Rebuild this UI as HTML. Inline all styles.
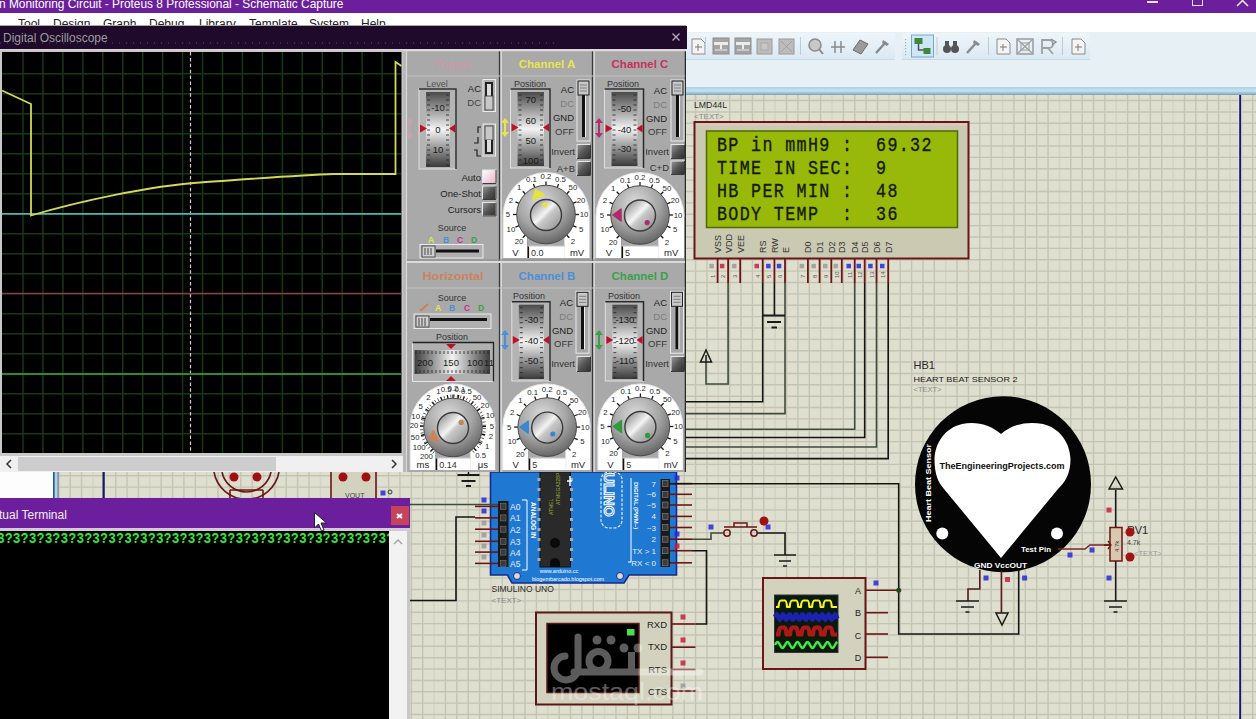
<!DOCTYPE html><html><head><meta charset="utf-8"><style>
html,body{margin:0;padding:0;width:1256px;height:719px;overflow:hidden;background:#dfdfcf;font-family:"Liberation Sans", sans-serif;}
.a{position:absolute;}
svg text{font-family:"Liberation Sans", sans-serif;}
</style></head><body>
<svg width="1256" height="719" style="position:absolute;left:0;top:0" ><g stroke="#d3d3c3" stroke-width="1.4"><line x1="36.11" y1="0" x2="36.11" y2="719"/><line x1="92.96" y1="0" x2="92.96" y2="719"/><line x1="149.81" y1="0" x2="149.81" y2="719"/><line x1="206.66" y1="0" x2="206.66" y2="719"/><line x1="263.51" y1="0" x2="263.51" y2="719"/><line x1="320.36" y1="0" x2="320.36" y2="719"/><line x1="377.21" y1="0" x2="377.21" y2="719"/><line x1="434.06" y1="0" x2="434.06" y2="719"/><line x1="490.91" y1="0" x2="490.91" y2="719"/><line x1="547.76" y1="0" x2="547.76" y2="719"/><line x1="604.61" y1="0" x2="604.61" y2="719"/><line x1="661.46" y1="0" x2="661.46" y2="719"/><line x1="718.31" y1="0" x2="718.31" y2="719"/><line x1="775.16" y1="0" x2="775.16" y2="719"/><line x1="832.01" y1="0" x2="832.01" y2="719"/><line x1="888.86" y1="0" x2="888.86" y2="719"/><line x1="945.71" y1="0" x2="945.71" y2="719"/><line x1="1002.56" y1="0" x2="1002.56" y2="719"/><line x1="1059.41" y1="0" x2="1059.41" y2="719"/><line x1="1116.26" y1="0" x2="1116.26" y2="719"/><line x1="1173.11" y1="0" x2="1173.11" y2="719"/><line x1="1229.96" y1="0" x2="1229.96" y2="719"/></g><g stroke="#c4c4b4" stroke-width="1.4"><line x1="2.00" y1="0" x2="2.00" y2="719"/><line x1="13.37" y1="0" x2="13.37" y2="719"/><line x1="24.74" y1="0" x2="24.74" y2="719"/><line x1="47.48" y1="0" x2="47.48" y2="719"/><line x1="58.85" y1="0" x2="58.85" y2="719"/><line x1="70.22" y1="0" x2="70.22" y2="719"/><line x1="81.59" y1="0" x2="81.59" y2="719"/><line x1="104.33" y1="0" x2="104.33" y2="719"/><line x1="115.70" y1="0" x2="115.70" y2="719"/><line x1="127.07" y1="0" x2="127.07" y2="719"/><line x1="138.44" y1="0" x2="138.44" y2="719"/><line x1="161.18" y1="0" x2="161.18" y2="719"/><line x1="172.55" y1="0" x2="172.55" y2="719"/><line x1="183.92" y1="0" x2="183.92" y2="719"/><line x1="195.29" y1="0" x2="195.29" y2="719"/><line x1="218.03" y1="0" x2="218.03" y2="719"/><line x1="229.40" y1="0" x2="229.40" y2="719"/><line x1="240.77" y1="0" x2="240.77" y2="719"/><line x1="252.14" y1="0" x2="252.14" y2="719"/><line x1="274.88" y1="0" x2="274.88" y2="719"/><line x1="286.25" y1="0" x2="286.25" y2="719"/><line x1="297.62" y1="0" x2="297.62" y2="719"/><line x1="308.99" y1="0" x2="308.99" y2="719"/><line x1="331.73" y1="0" x2="331.73" y2="719"/><line x1="343.10" y1="0" x2="343.10" y2="719"/><line x1="354.47" y1="0" x2="354.47" y2="719"/><line x1="365.84" y1="0" x2="365.84" y2="719"/><line x1="388.58" y1="0" x2="388.58" y2="719"/><line x1="399.95" y1="0" x2="399.95" y2="719"/><line x1="411.32" y1="0" x2="411.32" y2="719"/><line x1="422.69" y1="0" x2="422.69" y2="719"/><line x1="445.43" y1="0" x2="445.43" y2="719"/><line x1="456.80" y1="0" x2="456.80" y2="719"/><line x1="468.17" y1="0" x2="468.17" y2="719"/><line x1="479.54" y1="0" x2="479.54" y2="719"/><line x1="502.28" y1="0" x2="502.28" y2="719"/><line x1="513.65" y1="0" x2="513.65" y2="719"/><line x1="525.02" y1="0" x2="525.02" y2="719"/><line x1="536.39" y1="0" x2="536.39" y2="719"/><line x1="559.13" y1="0" x2="559.13" y2="719"/><line x1="570.50" y1="0" x2="570.50" y2="719"/><line x1="581.87" y1="0" x2="581.87" y2="719"/><line x1="593.24" y1="0" x2="593.24" y2="719"/><line x1="615.98" y1="0" x2="615.98" y2="719"/><line x1="627.35" y1="0" x2="627.35" y2="719"/><line x1="638.72" y1="0" x2="638.72" y2="719"/><line x1="650.09" y1="0" x2="650.09" y2="719"/><line x1="672.83" y1="0" x2="672.83" y2="719"/><line x1="684.20" y1="0" x2="684.20" y2="719"/><line x1="695.57" y1="0" x2="695.57" y2="719"/><line x1="706.94" y1="0" x2="706.94" y2="719"/><line x1="729.68" y1="0" x2="729.68" y2="719"/><line x1="741.05" y1="0" x2="741.05" y2="719"/><line x1="752.42" y1="0" x2="752.42" y2="719"/><line x1="763.79" y1="0" x2="763.79" y2="719"/><line x1="786.53" y1="0" x2="786.53" y2="719"/><line x1="797.90" y1="0" x2="797.90" y2="719"/><line x1="809.27" y1="0" x2="809.27" y2="719"/><line x1="820.64" y1="0" x2="820.64" y2="719"/><line x1="843.38" y1="0" x2="843.38" y2="719"/><line x1="854.75" y1="0" x2="854.75" y2="719"/><line x1="866.12" y1="0" x2="866.12" y2="719"/><line x1="877.49" y1="0" x2="877.49" y2="719"/><line x1="900.23" y1="0" x2="900.23" y2="719"/><line x1="911.60" y1="0" x2="911.60" y2="719"/><line x1="922.97" y1="0" x2="922.97" y2="719"/><line x1="934.34" y1="0" x2="934.34" y2="719"/><line x1="957.08" y1="0" x2="957.08" y2="719"/><line x1="968.45" y1="0" x2="968.45" y2="719"/><line x1="979.82" y1="0" x2="979.82" y2="719"/><line x1="991.19" y1="0" x2="991.19" y2="719"/><line x1="1013.93" y1="0" x2="1013.93" y2="719"/><line x1="1025.30" y1="0" x2="1025.30" y2="719"/><line x1="1036.67" y1="0" x2="1036.67" y2="719"/><line x1="1048.04" y1="0" x2="1048.04" y2="719"/><line x1="1070.78" y1="0" x2="1070.78" y2="719"/><line x1="1082.15" y1="0" x2="1082.15" y2="719"/><line x1="1093.52" y1="0" x2="1093.52" y2="719"/><line x1="1104.89" y1="0" x2="1104.89" y2="719"/><line x1="1127.63" y1="0" x2="1127.63" y2="719"/><line x1="1139.00" y1="0" x2="1139.00" y2="719"/><line x1="1150.37" y1="0" x2="1150.37" y2="719"/><line x1="1161.74" y1="0" x2="1161.74" y2="719"/><line x1="1184.48" y1="0" x2="1184.48" y2="719"/><line x1="1195.85" y1="0" x2="1195.85" y2="719"/><line x1="1207.22" y1="0" x2="1207.22" y2="719"/><line x1="1218.59" y1="0" x2="1218.59" y2="719"/><line x1="1241.33" y1="0" x2="1241.33" y2="719"/><line x1="1252.70" y1="0" x2="1252.70" y2="719"/><line x1="0" y1="9.60" x2="1256" y2="9.60"/><line x1="0" y1="20.97" x2="1256" y2="20.97"/><line x1="0" y1="32.34" x2="1256" y2="32.34"/><line x1="0" y1="43.71" x2="1256" y2="43.71"/><line x1="0" y1="55.08" x2="1256" y2="55.08"/><line x1="0" y1="66.45" x2="1256" y2="66.45"/><line x1="0" y1="77.82" x2="1256" y2="77.82"/><line x1="0" y1="89.19" x2="1256" y2="89.19"/><line x1="0" y1="100.56" x2="1256" y2="100.56"/><line x1="0" y1="111.93" x2="1256" y2="111.93"/><line x1="0" y1="123.30" x2="1256" y2="123.30"/><line x1="0" y1="134.67" x2="1256" y2="134.67"/><line x1="0" y1="146.04" x2="1256" y2="146.04"/><line x1="0" y1="157.41" x2="1256" y2="157.41"/><line x1="0" y1="168.78" x2="1256" y2="168.78"/><line x1="0" y1="180.15" x2="1256" y2="180.15"/><line x1="0" y1="191.52" x2="1256" y2="191.52"/><line x1="0" y1="202.89" x2="1256" y2="202.89"/><line x1="0" y1="214.26" x2="1256" y2="214.26"/><line x1="0" y1="225.63" x2="1256" y2="225.63"/><line x1="0" y1="237.00" x2="1256" y2="237.00"/><line x1="0" y1="248.37" x2="1256" y2="248.37"/><line x1="0" y1="259.74" x2="1256" y2="259.74"/><line x1="0" y1="271.11" x2="1256" y2="271.11"/><line x1="0" y1="282.48" x2="1256" y2="282.48"/><line x1="0" y1="293.85" x2="1256" y2="293.85"/><line x1="0" y1="305.22" x2="1256" y2="305.22"/><line x1="0" y1="316.59" x2="1256" y2="316.59"/><line x1="0" y1="327.96" x2="1256" y2="327.96"/><line x1="0" y1="339.33" x2="1256" y2="339.33"/><line x1="0" y1="350.70" x2="1256" y2="350.70"/><line x1="0" y1="362.07" x2="1256" y2="362.07"/><line x1="0" y1="373.44" x2="1256" y2="373.44"/><line x1="0" y1="384.81" x2="1256" y2="384.81"/><line x1="0" y1="396.18" x2="1256" y2="396.18"/><line x1="0" y1="407.55" x2="1256" y2="407.55"/><line x1="0" y1="418.92" x2="1256" y2="418.92"/><line x1="0" y1="430.29" x2="1256" y2="430.29"/><line x1="0" y1="441.66" x2="1256" y2="441.66"/><line x1="0" y1="453.03" x2="1256" y2="453.03"/><line x1="0" y1="464.40" x2="1256" y2="464.40"/><line x1="0" y1="475.77" x2="1256" y2="475.77"/><line x1="0" y1="487.14" x2="1256" y2="487.14"/><line x1="0" y1="498.51" x2="1256" y2="498.51"/><line x1="0" y1="509.88" x2="1256" y2="509.88"/><line x1="0" y1="521.25" x2="1256" y2="521.25"/><line x1="0" y1="532.62" x2="1256" y2="532.62"/><line x1="0" y1="543.99" x2="1256" y2="543.99"/><line x1="0" y1="555.36" x2="1256" y2="555.36"/><line x1="0" y1="566.73" x2="1256" y2="566.73"/><line x1="0" y1="578.10" x2="1256" y2="578.10"/><line x1="0" y1="589.47" x2="1256" y2="589.47"/><line x1="0" y1="600.84" x2="1256" y2="600.84"/><line x1="0" y1="612.21" x2="1256" y2="612.21"/><line x1="0" y1="623.58" x2="1256" y2="623.58"/><line x1="0" y1="634.95" x2="1256" y2="634.95"/><line x1="0" y1="646.32" x2="1256" y2="646.32"/><line x1="0" y1="657.69" x2="1256" y2="657.69"/><line x1="0" y1="669.06" x2="1256" y2="669.06"/><line x1="0" y1="680.43" x2="1256" y2="680.43"/><line x1="0" y1="691.80" x2="1256" y2="691.80"/><line x1="0" y1="703.17" x2="1256" y2="703.17"/><line x1="0" y1="714.54" x2="1256" y2="714.54"/></g></svg>
<svg class="a" style="left:0;top:0" width="1256" height="719"><rect x="0" y="472" width="53" height="30" fill="#fdfdfd"/><rect x="53" y="472" width="1.8" height="30" fill="#1e5a9a"/><rect x="54.8" y="472" width="2.4" height="30" fill="#a8d4ec"/><rect x="57.2" y="472" width="1.8" height="30" fill="#8898a8"/><rect x="102.5" y="472" width="2.2" height="30" fill="#181868"/><path d="M214 472A33 33 0 0 0 279 472" fill="none" stroke="#6a1616" stroke-width="1.6"/><path d="M222 472A25 25 0 0 0 271 472" fill="none" stroke="#6a1616" stroke-width="1.6"/><path d="M230 490V498M263 490V498M230 490H263" fill="none" stroke="#6a1616" stroke-width="1.5"/><circle cx="234" cy="477" r="4.5" fill="#a01010"/><circle cx="257" cy="477" r="4.5" fill="#a01010"/><rect x="331" y="466" width="45" height="40" fill="#d2d2be" stroke="#6a1616" stroke-width="1.6"/><circle cx="343" cy="477" r="4.5" fill="#a01010"/><circle cx="366" cy="477" r="4.5" fill="#a01010"/><text x="345" y="498" font-size="7" fill="#444">VOUT</text><rect x="380.5" y="490.5" width="5" height="5" fill="#2828d8" opacity="0.85"/><circle cx="390" cy="492" r="2" fill="none" stroke="#333"/><path d="M468.5 469V475" stroke="#1a1a1a" stroke-width="1.5"/><path d="M457.5 475H479.5M461.5 481H475.5M466.0 486H471.0" stroke="#1a1a1a" stroke-width="1.8"/><rect x="1238.5" y="95" width="3.5" height="624" fill="#e8e4f4"/><rect x="1239.2" y="95" width="2" height="624" fill="#1a1a60"/><text x="694" y="107.5" font-size="8.5" fill="#2a2a2a" textLength="33" lengthAdjust="spacingAndGlyphs">LMD44L</text><text x="694" y="118.5" font-size="8" fill="#8a8a8a">&lt;TEXT&gt;</text><rect x="694.5" y="122" width="274" height="136.5" fill="#cacab2" stroke="#6a1616" stroke-width="2"/><rect x="696" y="123.5" width="271" height="2" fill="#f0c8c8" opacity="0.5"/><rect x="706.5" y="131" width="251" height="96.5" fill="#98b80a" stroke="#4e6a00" stroke-width="1.5"/><g transform="translate(716.5 151) scale(0.86 1)"><text x="0.58 13.79 40.21 53.42 79.84 93.05 106.26 119.47 145.88 185.51 198.72 211.93 225.14 238.35" y="0" font-size="19.4" fill="#141a04" stroke="#141a04" stroke-width="0.35" style="font-family:&quot;Liberation Mono&quot;">BPinmmH9:69.32</text></g><g transform="translate(716.5 174) scale(0.86 1)"><text x="0.58 13.79 27.00 40.21 66.63 79.84 106.26 119.47 132.67 145.88 185.51" y="0" font-size="19.4" fill="#141a04" stroke="#141a04" stroke-width="0.35" style="font-family:&quot;Liberation Mono&quot;">TIMEINSEC:9</text></g><g transform="translate(716.5 197) scale(0.86 1)"><text x="0.58 13.79 40.21 53.42 66.63 93.05 106.26 119.47 145.88 185.51 198.72" y="0" font-size="19.4" fill="#141a04" stroke="#141a04" stroke-width="0.35" style="font-family:&quot;Liberation Mono&quot;">HBPERMIN:48</text></g><g transform="translate(716.5 220) scale(0.86 1)"><text x="0.58 13.79 27.00 40.21 66.63 79.84 93.05 106.26 145.88 185.51 198.72" y="0" font-size="19.4" fill="#141a04" stroke="#141a04" stroke-width="0.35" style="font-family:&quot;Liberation Mono&quot;">BODYTEMP:36</text></g><text transform="translate(721.1 253) rotate(-90)" font-size="9" fill="#333">VSS</text><text transform="translate(731.6 253) rotate(-90)" font-size="9" fill="#333">VDD</text><text transform="translate(743.7 253) rotate(-90)" font-size="9" fill="#333">VEE</text><text transform="translate(766.2 253) rotate(-90)" font-size="9" fill="#333">RS</text><text transform="translate(777.9 253) rotate(-90)" font-size="9" fill="#333">RW</text><text transform="translate(788.5 253) rotate(-90)" font-size="9" fill="#333">E</text><text transform="translate(811.4 253) rotate(-90)" font-size="9" fill="#333">D0</text><text transform="translate(823.1 253) rotate(-90)" font-size="9" fill="#333">D1</text><text transform="translate(834.8 253) rotate(-90)" font-size="9" fill="#333">D2</text><text transform="translate(845.3 253) rotate(-90)" font-size="9" fill="#333">D3</text><text transform="translate(858.2 253) rotate(-90)" font-size="9" fill="#333">D4</text><text transform="translate(868.2 253) rotate(-90)" font-size="9" fill="#333">D5</text><text transform="translate(880.0 253) rotate(-90)" font-size="9" fill="#333">D6</text><text transform="translate(891.7 253) rotate(-90)" font-size="9" fill="#333">D7</text><line x1="717.6" y1="259" x2="717.6" y2="283" stroke="#6e1414" stroke-width="1.8"/><rect x="709.4" y="263.8" width="4.5" height="4.5" fill="#9a9a9a" opacity="0.85"/><text transform="translate(714.6 278) rotate(-90)" font-size="6" fill="#555">1</text><line x1="728.1" y1="259" x2="728.1" y2="283" stroke="#6e1414" stroke-width="1.8"/><rect x="719.9" y="263.8" width="4.5" height="4.5" fill="#c81e3c" opacity="0.85"/><text transform="translate(725.1 278) rotate(-90)" font-size="6" fill="#555">2</text><line x1="740.2" y1="259" x2="740.2" y2="283" stroke="#6e1414" stroke-width="1.8"/><rect x="732.0" y="263.8" width="4.5" height="4.5" fill="#9a9a9a" opacity="0.85"/><text transform="translate(737.2 278) rotate(-90)" font-size="6" fill="#555">3</text><line x1="762.7" y1="259" x2="762.7" y2="283" stroke="#6e1414" stroke-width="1.8"/><rect x="754.5" y="263.8" width="4.5" height="4.5" fill="#c81e3c" opacity="0.85"/><text transform="translate(759.7 278) rotate(-90)" font-size="6" fill="#555">4</text><line x1="774.4" y1="259" x2="774.4" y2="283" stroke="#6e1414" stroke-width="1.8"/><rect x="766.1" y="263.8" width="4.5" height="4.5" fill="#2828d8" opacity="0.85"/><text transform="translate(771.4 278) rotate(-90)" font-size="6" fill="#555">5</text><line x1="785" y1="259" x2="785" y2="283" stroke="#6e1414" stroke-width="1.8"/><rect x="776.8" y="263.8" width="4.5" height="4.5" fill="#2828d8" opacity="0.85"/><text transform="translate(782 278) rotate(-90)" font-size="6" fill="#555">6</text><line x1="807.9" y1="259" x2="807.9" y2="283" stroke="#6e1414" stroke-width="1.8"/><rect x="799.6" y="263.8" width="4.5" height="4.5" fill="#9a9a9a" opacity="0.85"/><text transform="translate(804.9 278) rotate(-90)" font-size="6" fill="#555">7</text><line x1="819.6" y1="259" x2="819.6" y2="283" stroke="#6e1414" stroke-width="1.8"/><rect x="811.4" y="263.8" width="4.5" height="4.5" fill="#9a9a9a" opacity="0.85"/><text transform="translate(816.6 278) rotate(-90)" font-size="6" fill="#555">8</text><line x1="831.3" y1="259" x2="831.3" y2="283" stroke="#6e1414" stroke-width="1.8"/><rect x="823.0" y="263.8" width="4.5" height="4.5" fill="#9a9a9a" opacity="0.85"/><text transform="translate(828.3 278) rotate(-90)" font-size="6" fill="#555">9</text><line x1="841.8" y1="259" x2="841.8" y2="283" stroke="#6e1414" stroke-width="1.8"/><rect x="833.5" y="263.8" width="4.5" height="4.5" fill="#9a9a9a" opacity="0.85"/><text transform="translate(838.8 278) rotate(-90)" font-size="6" fill="#555">10</text><line x1="854.7" y1="259" x2="854.7" y2="283" stroke="#6e1414" stroke-width="1.8"/><rect x="846.5" y="263.8" width="4.5" height="4.5" fill="#2828d8" opacity="0.85"/><text transform="translate(851.7 278) rotate(-90)" font-size="6" fill="#555">11</text><line x1="864.7" y1="259" x2="864.7" y2="283" stroke="#6e1414" stroke-width="1.8"/><rect x="856.5" y="263.8" width="4.5" height="4.5" fill="#2828d8" opacity="0.85"/><text transform="translate(861.7 278) rotate(-90)" font-size="6" fill="#555">12</text><line x1="876.5" y1="259" x2="876.5" y2="283" stroke="#6e1414" stroke-width="1.8"/><rect x="868.2" y="263.8" width="4.5" height="4.5" fill="#2828d8" opacity="0.85"/><text transform="translate(873.5 278) rotate(-90)" font-size="6" fill="#555">13</text><line x1="888.2" y1="259" x2="888.2" y2="283" stroke="#6e1414" stroke-width="1.8"/><rect x="880.0" y="263.8" width="4.5" height="4.5" fill="#2828d8" opacity="0.85"/><text transform="translate(885.2 278) rotate(-90)" font-size="6" fill="#555">14</text><path d="M728.1 283 L728.1 384 L706 384 L706 362" fill="none" stroke="#3e4c3e" stroke-width="1.6" stroke-linejoin="miter"/><path d="M706 350L700.5 362H711.5Z" fill="none" stroke="#1a1a1a" stroke-width="1.5"/><path d="M706 355V362" stroke="#1a1a1a" stroke-width="1.5"/><path d="M762.7 283 L762.7 401.7 L686 401.7" fill="none" stroke="#141414" stroke-width="1.6" stroke-linejoin="miter"/><path d="M774.4 283 L774.4 315" fill="none" stroke="#141414" stroke-width="1.6" stroke-linejoin="miter"/><path d="M785 283 L785 413.6 L686 413.6" fill="none" stroke="#3e4c3e" stroke-width="1.6" stroke-linejoin="miter"/><path d="M762.7 315.5H785M767 322H781M771.5 327.5H777" stroke="#1a1a1a" stroke-width="1.8"/><path d="M854.7 283 L854.7 429.2 L686 429.2" fill="none" stroke="#3e4c3e" stroke-width="1.6" stroke-linejoin="miter"/><path d="M864.7 283 L864.7 437.5 L686 437.5" fill="none" stroke="#141414" stroke-width="1.6" stroke-linejoin="miter"/><path d="M876.5 283 L876.5 447 L686 447" fill="none" stroke="#3e4c3e" stroke-width="1.6" stroke-linejoin="miter"/><path d="M888.2 283 L888.2 458.6 L686 458.6" fill="none" stroke="#141414" stroke-width="1.6" stroke-linejoin="miter"/><path d="M490.5 472V575H507.5L512 583H624L629 575H676.5V472Z" fill="#1f78d1" stroke="#1a2a8a" stroke-width="1.6"/><rect x="498" y="501" width="10.5" height="66" fill="#1a1a1a"/><rect x="500.5" y="503.4" width="5.5" height="6" fill="#3a3a3a" stroke="#777" stroke-width="0.6"/><text x="510" y="509.9" font-size="8.5" fill="#e8f0ff">A0</text><line x1="475" y1="506.4" x2="498" y2="506.4" stroke="#6e1414" stroke-width="1.6"/><rect x="500.5" y="514.9" width="5.5" height="6" fill="#3a3a3a" stroke="#777" stroke-width="0.6"/><text x="510" y="521.4" font-size="8.5" fill="#e8f0ff">A1</text><line x1="475" y1="517.9" x2="498" y2="517.9" stroke="#6e1414" stroke-width="1.6"/><rect x="500.5" y="526.2" width="5.5" height="6" fill="#3a3a3a" stroke="#777" stroke-width="0.6"/><text x="510" y="532.7" font-size="8.5" fill="#e8f0ff">A2</text><line x1="475" y1="529.2" x2="498" y2="529.2" stroke="#6e1414" stroke-width="1.6"/><rect x="500.5" y="538.3" width="5.5" height="6" fill="#3a3a3a" stroke="#777" stroke-width="0.6"/><text x="510" y="544.8" font-size="8.5" fill="#e8f0ff">A3</text><line x1="475" y1="541.3" x2="498" y2="541.3" stroke="#6e1414" stroke-width="1.6"/><rect x="500.5" y="549.1" width="5.5" height="6" fill="#3a3a3a" stroke="#777" stroke-width="0.6"/><text x="510" y="555.6" font-size="8.5" fill="#e8f0ff">A4</text><line x1="475" y1="552.1" x2="498" y2="552.1" stroke="#6e1414" stroke-width="1.6"/><rect x="500.5" y="560.4" width="5.5" height="6" fill="#3a3a3a" stroke="#777" stroke-width="0.6"/><text x="510" y="566.9" font-size="8.5" fill="#e8f0ff">A5</text><line x1="475" y1="563.4" x2="498" y2="563.4" stroke="#6e1414" stroke-width="1.6"/><path d="M522 500H527V570H522" fill="none" stroke="#fff" stroke-width="1"/><text transform="translate(531 502) rotate(90)" font-size="6.5" font-weight="bold" fill="#fff">ANALOG IN</text><rect x="540" y="472" width="30.5" height="95" fill="#2a2a2a" stroke="#111"/><rect x="537.5" y="478" width="3" height="3" fill="#aaa"/><rect x="570" y="478" width="3" height="3" fill="#aaa"/><rect x="537.5" y="488" width="3" height="3" fill="#aaa"/><rect x="570" y="488" width="3" height="3" fill="#aaa"/><rect x="537.5" y="498" width="3" height="3" fill="#aaa"/><rect x="570" y="498" width="3" height="3" fill="#aaa"/><rect x="537.5" y="508" width="3" height="3" fill="#aaa"/><rect x="570" y="508" width="3" height="3" fill="#aaa"/><rect x="537.5" y="518" width="3" height="3" fill="#aaa"/><rect x="570" y="518" width="3" height="3" fill="#aaa"/><rect x="537.5" y="528" width="3" height="3" fill="#aaa"/><rect x="570" y="528" width="3" height="3" fill="#aaa"/><rect x="537.5" y="538" width="3" height="3" fill="#aaa"/><rect x="570" y="538" width="3" height="3" fill="#aaa"/><rect x="537.5" y="548" width="3" height="3" fill="#aaa"/><rect x="570" y="548" width="3" height="3" fill="#aaa"/><rect x="537.5" y="558" width="3" height="3" fill="#aaa"/><rect x="570" y="558" width="3" height="3" fill="#aaa"/><circle cx="555" cy="543" r="5" fill="#0a0a0a"/><path d="M550 563A5 5 0 0 1 560 563V567H550Z" fill="#0a0a0a"/><text transform="translate(553 515) rotate(-90)" font-size="5" fill="#9ab030">ATMEL</text><text transform="translate(560 505) rotate(-90)" font-size="5" fill="#9ab030">ATMEGA328P</text><rect x="601" y="472" width="21" height="56" rx="8" fill="none" stroke="#e0ecff" stroke-width="1.2" stroke-dasharray="3,1.5"/><text transform="translate(604 473) rotate(90)" font-size="14" font-weight="bold" fill="#1f78d1" stroke="#fff" stroke-width="1">ULINO</text><path d="M567 481H572M570 476V486" stroke="#fff" stroke-width="1.5"/><path d="M631 478V562H628" fill="none" stroke="#fff" stroke-width="1"/><text transform="translate(634 482) rotate(90)" font-size="6" font-weight="bold" fill="#fff">DIGITAL (PWM~)</text><rect x="660.5" y="479" width="9.5" height="88" fill="#1a1a1a"/><rect x="662.5" y="480.6" width="5.5" height="6" fill="#3a3a3a" stroke="#888" stroke-width="0.6"/><text x="656" y="486.6" font-size="8" text-anchor="end" fill="#e8f0ff">7</text><line x1="670" y1="483.6" x2="692" y2="483.6" stroke="#6e1414" stroke-width="1.6"/><rect x="662.5" y="491.3" width="5.5" height="6" fill="#3a3a3a" stroke="#888" stroke-width="0.6"/><text x="656" y="497.3" font-size="8" text-anchor="end" fill="#e8f0ff">~6</text><line x1="670" y1="494.3" x2="692" y2="494.3" stroke="#6e1414" stroke-width="1.6"/><rect x="662.5" y="502" width="5.5" height="6" fill="#3a3a3a" stroke="#888" stroke-width="0.6"/><text x="656" y="508" font-size="8" text-anchor="end" fill="#e8f0ff">~5</text><line x1="670" y1="505" x2="692" y2="505" stroke="#6e1414" stroke-width="1.6"/><rect x="662.5" y="513.4" width="5.5" height="6" fill="#3a3a3a" stroke="#888" stroke-width="0.6"/><text x="656" y="519.4" font-size="8" text-anchor="end" fill="#e8f0ff">4</text><line x1="670" y1="516.4" x2="692" y2="516.4" stroke="#6e1414" stroke-width="1.6"/><rect x="662.5" y="524.5" width="5.5" height="6" fill="#3a3a3a" stroke="#888" stroke-width="0.6"/><text x="656" y="530.5" font-size="8" text-anchor="end" fill="#e8f0ff">~3</text><line x1="670" y1="527.5" x2="692" y2="527.5" stroke="#6e1414" stroke-width="1.6"/><rect x="662.5" y="536.2" width="5.5" height="6" fill="#3a3a3a" stroke="#888" stroke-width="0.6"/><text x="656" y="542.2" font-size="8" text-anchor="end" fill="#e8f0ff">2</text><line x1="670" y1="539.2" x2="692" y2="539.2" stroke="#6e1414" stroke-width="1.6"/><rect x="662.5" y="547.7" width="5.5" height="6" fill="#3a3a3a" stroke="#888" stroke-width="0.6"/><text x="656" y="553.7" font-size="8" text-anchor="end" fill="#e8f0ff">TX &gt; 1</text><line x1="670" y1="550.7" x2="692" y2="550.7" stroke="#6e1414" stroke-width="1.6"/><rect x="662.5" y="559.8" width="5.5" height="6" fill="#3a3a3a" stroke="#888" stroke-width="0.6"/><text x="656" y="565.8" font-size="8" text-anchor="end" fill="#e8f0ff">RX &lt; 0</text><line x1="670" y1="562.8" x2="692" y2="562.8" stroke="#6e1414" stroke-width="1.6"/><text x="559" y="573" font-size="5.5" fill="#fff" text-anchor="middle">www.arduino.cc</text><text x="568" y="580.5" font-size="5.5" fill="#fff" text-anchor="middle">blogembarcado.blogspot.com</text><circle cx="517" cy="576" r="3.5" fill="#d8d8d8" stroke="#1a2a8a"/><circle cx="620" cy="576" r="3.5" fill="#d8d8d8" stroke="#1a2a8a"/><text x="491.5" y="591.5" font-size="8.5" fill="#2a2a2a">SIMULINO UNO</text><text x="491.5" y="603" font-size="8" fill="#8a8a8a">&lt;TEXT&gt;</text><rect x="481.5" y="497.5" width="5" height="5" fill="#2828d8" opacity="0.85"/><rect x="481.5" y="508.5" width="5" height="5" fill="#2828d8" opacity="0.85"/><rect x="481.5" y="520.5" width="5" height="5" fill="#9a9a9a" opacity="0.85"/><rect x="481.5" y="532.5" width="5" height="5" fill="#9a9a9a" opacity="0.85"/><rect x="481.5" y="543.5" width="5" height="5" fill="#9a9a9a" opacity="0.85"/><rect x="481.5" y="554.5" width="5" height="5" fill="#9a9a9a" opacity="0.85"/><rect x="674.5" y="475.5" width="5" height="5" fill="#2828d8" opacity="0.85"/><rect x="674.5" y="531.5" width="5" height="5" fill="#2828d8" opacity="0.85"/><rect x="674.5" y="543.5" width="5" height="5" fill="#c81e3c" opacity="0.85"/><path d="M409 504.5 L498 504.5" fill="none" stroke="#3e4c3e" stroke-width="1.6" stroke-linejoin="miter"/><path d="M475 517 L456 517 L456 600.5 L409 600.5" fill="none" stroke="#141414" stroke-width="1.6" stroke-linejoin="miter"/><rect x="536" y="612.5" width="135.5" height="92" fill="#d2d2be" stroke="#5a1818" stroke-width="2"/><rect x="547" y="623.5" width="92" height="69" fill="#000" stroke="#5a1818" stroke-width="1.5"/><rect x="627" y="629" width="7.5" height="6.5" fill="#4ae04a"/><text x="667" y="627.5" font-size="9.5" text-anchor="end" fill="#222">RXD</text><text x="667" y="650" font-size="9.5" text-anchor="end" fill="#222">TXD</text><text x="667" y="672.5" font-size="9.5" text-anchor="end" fill="#222">RTS</text><text x="667" y="694.5" font-size="9.5" text-anchor="end" fill="#222">CTS</text><line x1="672" y1="624" x2="695.5" y2="624" stroke="#6e1414" stroke-width="1.6"/><line x1="672" y1="647.2" x2="695.5" y2="647.2" stroke="#6e1414" stroke-width="1.6"/><line x1="672" y1="669.5" x2="695.5" y2="669.5" stroke="#6e1414" stroke-width="1.6"/><line x1="672" y1="691" x2="695.5" y2="691" stroke="#6e1414" stroke-width="1.6"/><rect x="680.5" y="614.5" width="5" height="5" fill="#c81e3c" opacity="0.85"/><rect x="680.5" y="637.5" width="5" height="5" fill="#c81e3c" opacity="0.85"/><rect x="680.5" y="660.5" width="5" height="5" fill="#c81e3c" opacity="0.85"/><rect x="680.5" y="683.5" width="5" height="5" fill="#9a9a9a" opacity="0.85"/><path d="M695.5 624 L706.5 624 L706.5 550.7 L692 550.7" fill="none" stroke="#141414" stroke-width="1.6" stroke-linejoin="miter"/><path d="M692 539.2 L711 539.2 L711 533 L723.5 533" fill="none" stroke="#3e4c3e" stroke-width="1.6" stroke-linejoin="miter"/><circle cx="727" cy="533" r="3.2" fill="none" stroke="#6a1616" stroke-width="1.5"/><circle cx="754" cy="533" r="3.2" fill="none" stroke="#6a1616" stroke-width="1.5"/><path d="M724 527H757M734 527V523H747V527" fill="none" stroke="#6a1616" stroke-width="1.5"/><circle cx="764" cy="521" r="4.5" fill="#a01010"/><path d="M757.5 533 L785 533 L785 555" fill="none" stroke="#141414" stroke-width="1.6" stroke-linejoin="miter"/><path d="M774 555H796M779 561H791M783 566H787" stroke="#1a1a1a" stroke-width="1.6"/><rect x="708.5" y="524.5" width="5" height="5" fill="#2828d8" opacity="0.85"/><rect x="765.5" y="524.5" width="5" height="5" fill="#2828d8" opacity="0.85"/><rect x="763" y="578" width="102.5" height="91" fill="#d2d2be" stroke="#6a1616" stroke-width="2"/><rect x="774.5" y="595" width="63.5" height="57.5" fill="#0a1a0a" stroke="#333" stroke-width="1"/><path d="M776 607H778.5 Q779.0 600.5 781.0 600.5 H785.0 Q786.5 600.5 787.0 607 H789.7 Q790.2 600.5 792.2 600.5 H796.2 Q797.7 600.5 798.2 607 H800.9000000000001 Q801.4000000000001 600.5 803.4000000000001 600.5 H807.4000000000001 Q808.9000000000001 600.5 809.4000000000001 607 H812.1000000000001 Q812.6000000000001 600.5 814.6000000000001 600.5 H818.6000000000001 Q820.1000000000001 600.5 820.6000000000001 607 H823.3000000000002 Q823.8000000000002 600.5 825.8000000000002 600.5 H829.8000000000002 Q831.3000000000002 600.5 831.8000000000002 607 H834.5000000000002 H837" fill="none" stroke="#f4f42a" stroke-width="2.2" stroke-linejoin="round"/><path d="M775.0 617.0 L775.8 615.3 L776.6 614.5 L777.4 615.2 L778.2 616.9 L779.0 618.7 L779.8 619.5 L780.6 618.9 L781.4 617.2 L782.2 615.4 L783.0 614.5 L783.8 615.0 L784.6 616.6 L785.4 618.5 L786.2 619.5 L787.0 619.1 L787.8 617.5 L788.6 615.6 L789.4 614.6 L790.2 614.9 L791.0 616.4 L791.8 618.3 L792.6 619.4 L793.4 619.2 L794.2 617.7 L795.0 615.8 L795.8 614.6 L796.6 614.8 L797.4 616.2 L798.2 618.1 L799.0 619.3 L799.8 619.3 L800.6 617.9 L801.4 616.1 L802.2 614.7 L803.0 614.7 L803.8 615.9 L804.6 617.8 L805.4 619.2 L806.2 619.4 L807.0 618.2 L807.8 616.3 L808.6 614.8 L809.4 614.6 L810.2 615.7 L811.0 617.6 L811.8 619.1 L812.6 619.4 L813.4 618.4 L814.2 616.5 L815.0 614.9 L815.8 614.5 L816.6 615.5 L817.4 617.4 L818.2 619.0 L819.0 619.5 L819.8 618.6 L820.6 616.8 L821.4 615.1 L822.2 614.5 L823.0 615.3 L823.8 617.1 L824.6 618.8 L825.4 619.5 L826.2 618.7 L827.0 617.0 L827.8 615.3 L828.6 614.5 L829.4 615.2 L830.2 616.9 L831.0 618.7 L831.8 619.5 L832.6 618.9 L833.4 617.2 L834.2 615.4 L835.0 614.5 L835.8 615.0 L836.6 616.6 L837.4 618.5" fill="none" stroke="#1c22b0" stroke-width="4.5"/><path d="M776 634.5H778.5 Q779.0 627.5 781.0 627.5 H784.5 Q786.0 627.5 786.5 634.5 H790.0 Q790.5 627.5 792.5 627.5 H796.0 Q797.5 627.5 798.0 634.5 H801.5 Q802.0 627.5 804.0 627.5 H807.5 Q809.0 627.5 809.5 634.5 H813.0 Q813.5 627.5 815.5 627.5 H819.0 Q820.5 627.5 821.0 634.5 H824.5 Q825.0 627.5 827.0 627.5 H830.5 Q832.0 627.5 832.5 634.5 H836.0 H837" fill="none" stroke="#b01818" stroke-width="4.2" stroke-linejoin="round"/><path d="M775.0 645.0 L775.8 643.6 L776.6 642.5 L777.4 642.0 L778.2 642.3 L779.0 643.2 L779.8 644.6 L780.6 646.1 L781.4 647.3 L782.2 647.9 L783.0 647.9 L783.8 647.1 L784.6 645.7 L785.4 644.3 L786.2 642.9 L787.0 642.1 L787.8 642.1 L788.6 642.7 L789.4 643.9 L790.2 645.4 L791.0 646.8 L791.8 647.7 L792.6 648.0 L793.4 647.5 L794.2 646.4 L795.0 645.0 L795.8 643.6 L796.6 642.5 L797.4 642.0 L798.2 642.3 L799.0 643.2 L799.8 644.6 L800.6 646.1 L801.4 647.3 L802.2 647.9 L803.0 647.9 L803.8 647.1 L804.6 645.7 L805.4 644.3 L806.2 642.9 L807.0 642.1 L807.8 642.1 L808.6 642.7 L809.4 643.9 L810.2 645.4 L811.0 646.8 L811.8 647.7 L812.6 648.0 L813.4 647.5 L814.2 646.4 L815.0 645.0 L815.8 643.6 L816.6 642.5 L817.4 642.0 L818.2 642.3 L819.0 643.2 L819.8 644.6 L820.6 646.1 L821.4 647.3 L822.2 647.9 L823.0 647.9 L823.8 647.1 L824.6 645.7 L825.4 644.3 L826.2 642.9 L827.0 642.1 L827.8 642.1 L828.6 642.7 L829.4 643.9 L830.2 645.4 L831.0 646.8 L831.8 647.7 L832.6 648.0 L833.4 647.5 L834.2 646.4 L835.0 645.0 L835.8 643.6 L836.6 642.5 L837.4 642.0" fill="none" stroke="#3af03a" stroke-width="2.4"/><text x="858" y="593.5" font-size="9" text-anchor="middle" fill="#222">A</text><text x="858" y="616" font-size="9" text-anchor="middle" fill="#222">B</text><text x="858" y="638.5" font-size="9" text-anchor="middle" fill="#222">C</text><text x="858" y="661" font-size="9" text-anchor="middle" fill="#222">D</text><line x1="866" y1="590.2" x2="898.7" y2="590.2" stroke="#6e1414" stroke-width="1.6"/><line x1="866" y1="612.7" x2="888" y2="612.7" stroke="#6e1414" stroke-width="1.6"/><line x1="866" y1="634" x2="888" y2="634" stroke="#6e1414" stroke-width="1.6"/><line x1="866" y1="657.3" x2="888" y2="657.3" stroke="#6e1414" stroke-width="1.6"/><rect x="873.5" y="580.5" width="5" height="5" fill="#2828d8" opacity="0.85"/><text x="913.5" y="368.5" font-size="11" fill="#2a2a2a">HB1</text><text x="913.5" y="381.5" font-size="8" fill="#1a1a1a" textLength="104" lengthAdjust="spacingAndGlyphs">HEART BEAT SENSOR 2</text><text x="913.5" y="392" font-size="7.5" fill="#8a8a8a">&lt;TEXT&gt;</text><circle cx="1003" cy="484.3" r="88" fill="#050505"/><path d="M1001 434C 990 424, 975 421, 962 424 C 945 428, 935 443, 934.5 459 C 934.5 474, 938 482, 944 489 L1001 558 L1058 489 C 1065 482, 1070.5 474, 1070.5 459 C 1070 443, 1060 428, 1043 424 C 1028 421, 1012 424, 1001 434Z" fill="#fff"/><circle cx="942.3" cy="533.4" r="6" fill="#fff"/><circle cx="1057" cy="533.4" r="6" fill="#fff"/><text x="1002" y="469" font-size="8.6" font-weight="bold" text-anchor="middle" fill="#111" textLength="125" lengthAdjust="spacingAndGlyphs">TheEngineeringProjects.com</text><text transform="translate(931 522) rotate(-90)" font-size="8" font-weight="bold" fill="#fff" textLength="78" lengthAdjust="spacingAndGlyphs">Heart Beat Sensor</text><text x="1021" y="552" font-size="8" font-weight="bold" fill="#fff" textLength="30" lengthAdjust="spacingAndGlyphs">Test Pin</text><text x="974" y="567.5" font-size="8" font-weight="bold" fill="#fff" textLength="53" lengthAdjust="spacingAndGlyphs">GND VccOUT</text><path d="M979.8 570 L979.8 589 L968 589 L968 601" fill="none" stroke="#5a1a1a" stroke-width="1.6" stroke-linejoin="miter"/><path d="M956 601H979M961 607H974M965.5 612H969.5" stroke="#1a1a1a" stroke-width="1.6"/><path d="M1001.4 571 L1001.4 613" fill="none" stroke="#5a1a1a" stroke-width="1.6" stroke-linejoin="miter"/><path d="M996 613H1008L1002 625Z" fill="none" stroke="#1a1a1a" stroke-width="1.5"/><path d="M1018.7 570 L1018.7 634 L898.7 634 L898.7 483.8 L670 483.8" fill="none" stroke="#141414" stroke-width="1.6" stroke-linejoin="miter"/><circle cx="898.7" cy="590.2" r="2.5" fill="#1a4a1a"/><rect x="983.5" y="575.5" width="5" height="5" fill="#2828d8" opacity="0.85"/><rect x="1005.0" y="577.0" width="5" height="5" fill="#c81e3c" opacity="0.85"/><rect x="1022.1" y="575.5" width="5" height="5" fill="#2828d8" opacity="0.85"/><path d="M1058 549 L1085 549 L1090 545 L1110 545" fill="none" stroke="#7a2a2a" stroke-width="1.6" stroke-linejoin="miter"/><rect x="1067.5" y="552.5" width="5" height="5" fill="#2828d8" opacity="0.85"/><rect x="1089.5" y="547.5" width="5" height="5" fill="#2828d8" opacity="0.85"/><path d="M1115.7 490 L1115.7 527.5" fill="none" stroke="#1a1a1a" stroke-width="1.6" stroke-linejoin="miter"/><path d="M1109 489L1115.7 477L1122.5 489Z" fill="none" stroke="#1a1a1a" stroke-width="1.5"/><rect x="1110" y="527.5" width="12" height="33.5" fill="#d8c8b0" stroke="#6a1616" stroke-width="1.5"/><text transform="translate(1119 552) rotate(-90)" font-size="6" fill="#333">4.7k</text><path d="M1104 545H1111M1108 541L1111 545L1108 549" fill="none" stroke="#6a1616" stroke-width="1.3"/><path d="M1115.7 561 L1115.7 601" fill="none" stroke="#1a1a1a" stroke-width="1.6" stroke-linejoin="miter"/><path d="M1104 601H1127M1109 607H1122M1113.5 612H1117.5" stroke="#1a1a1a" stroke-width="1.6"/><text x="1127" y="534" font-size="11" fill="#2a2a2a">RV1</text><text x="1127" y="544.5" font-size="7" fill="#444">4.7k</text><text x="1134" y="556" font-size="7.5" fill="#9a9a9a">&lt;TEXT&gt;</text><circle cx="1130" cy="532" r="4.5" fill="#a01414"/><circle cx="1130" cy="557" r="4.5" fill="#a01414"/><rect x="1106.5" y="507.5" width="5" height="5" fill="#c81e3c" opacity="0.85"/><rect x="1106.5" y="575.5" width="5" height="5" fill="#2828d8" opacity="0.85"/><g opacity="0.36"><path d="M578 637V668A12 12 0 1 1 565 656" fill="none" stroke="#ffffff" stroke-width="7" stroke-linecap="round"/><path d="M574 672H700" stroke="#ffffff" stroke-width="7" stroke-linecap="round"/><circle cx="598.5" cy="661" r="9.5" fill="none" stroke="#ffffff" stroke-width="7"/><circle cx="597" cy="640" r="4.5" fill="#ffffff"/><circle cx="611" cy="640" r="4.5" fill="#ffffff"/><path d="M631.5 652V672" stroke="#ffffff" stroke-width="7"/><circle cx="624" cy="648" r="4.5" fill="#ffffff"/><circle cx="638" cy="648" r="4.5" fill="#ffffff"/><text x="551" y="700" font-size="23" fill="#ffffff" textLength="152" lengthAdjust="spacingAndGlyphs">mostaql.com</text></g></svg>
<div class="a" style="left:0;top:0;width:1256px;height:13px;background:#6b1f9c;overflow:hidden"><div class="a" style="left:-1px;top:-4.2px;font-size:13px;line-height:16px;color:#fff;white-space:nowrap;transform-origin:0 0;transform:scaleX(0.915)">n Monitoring Circuit - Proteus 8 Professional - Schematic Capture</div><div class="a" style="left:1147px;top:1px;width:11px;height:1.5px;background:#e8e0f0"></div><div class="a" style="left:1192px;top:-4px;width:9px;height:8px;border:1.5px solid #e8e0f0"></div><svg class="a" style="left:1236px;top:0" width="14" height="13"><path d="M1 -5L12 6M12 -5L1 6" stroke="#eee" stroke-width="1.5"/></svg></div>
<div class="a" style="left:0;top:13px;width:1256px;height:19px;background:#fff;overflow:hidden"></div>
<div class="a" style="left:18px;top:16.5px;font-size:12px;line-height:14px;color:#222;white-space:nowrap">Tool</div>
<div class="a" style="left:53px;top:16.5px;font-size:12px;line-height:14px;color:#222;white-space:nowrap">Design</div>
<div class="a" style="left:103px;top:16.5px;font-size:12px;line-height:14px;color:#222;white-space:nowrap">Graph</div>
<div class="a" style="left:149px;top:16.5px;font-size:12px;line-height:14px;color:#222;white-space:nowrap">Debug</div>
<div class="a" style="left:199px;top:16.5px;font-size:12px;line-height:14px;color:#222;white-space:nowrap">Library</div>
<div class="a" style="left:249px;top:16.5px;font-size:12px;line-height:14px;color:#222;white-space:nowrap">Template</div>
<div class="a" style="left:309px;top:16.5px;font-size:12px;line-height:14px;color:#222;white-space:nowrap">System</div>
<div class="a" style="left:361px;top:16.5px;font-size:12px;line-height:14px;color:#222;white-space:nowrap">Help</div>
<div class="a" style="left:686px;top:32px;width:570px;height:56px;background:#e7f0f5"></div>
<div class="a" style="left:686px;top:33px;width:209px;height:26px;background:linear-gradient(#eef5fa,#dbe9f3);border-bottom:1px solid #c6dbea"></div>
<div class="a" style="left:902px;top:33px;width:188px;height:26px;background:linear-gradient(#eef5fa,#dbe9f3);border-bottom:1px solid #c6dbea"></div>
<div class="a" style="left:686px;top:87px;width:570px;height:8px;background:linear-gradient(#a7d2ea,#c6e2f2 50%,#7f9fb5)"></div>
<svg class="a" style="left:0;top:0" width="1256" height="95"><path d="M692 39H701L705 43V54H692Z" fill="#f4f4f4" stroke="#8a8a8a"/><path d="M695 47H702M698 44V51" stroke="#7a7a7a"/><line x1="705.5" y1="37" x2="705.5" y2="55" stroke="#c0ccd4" stroke-width="1"/><rect x="713" y="38" width="16" height="16" fill="#a4a4a4" stroke="#8c8c8c"/><rect x="714" y="42" width="14" height="3" fill="#ececec"/><rect x="720" y="45" width="2" height="4" fill="#ececec"/><rect x="715" y="49" width="12" height="2" fill="#c8c8c8"/><rect x="735" y="38" width="16" height="16" fill="#a4a4a4" stroke="#8c8c8c"/><rect x="736" y="42" width="14" height="3" fill="#ececec"/><rect x="742" y="45" width="2" height="4" fill="#ececec"/><rect x="737" y="49" width="12" height="2" fill="#c8c8c8"/><rect x="757" y="39" width="15" height="15" fill="#bcbcbc" stroke="#9a9a9a"/><rect x="761" y="43" width="7" height="7" fill="#c8c8c8" stroke="#a8a8a8"/><rect x="779" y="39" width="15" height="15" fill="#bcbcbc" stroke="#9a9a9a"/><path d="M781 41L792 52M792 41L781 52" stroke="#a0a0a0"/><line x1="800.5" y1="37" x2="800.5" y2="55" stroke="#c0ccd4" stroke-width="1"/><circle cx="815" cy="45" r="6" fill="#c8c8c8" stroke="#8a8a8a" stroke-width="1.5"/><path d="M819 49L823 54" stroke="#8a8a8a" stroke-width="2"/><path d="M831 47H845M835 41V53M841 41V53" stroke="#8a8a8a" stroke-width="1.5"/><path d="M853 50L860 40L868 44L861 54Z" fill="#9a9a9a" stroke="#6a6a6a"/><path d="M876 53L886 42" stroke="#8a8a8a" stroke-width="2.5"/><path d="M883 40L889 44L887 46L882 43Z" fill="#8a8a8a"/><rect x="905" y="39" width="1.2" height="1.2" fill="#9ab0c0"/><rect x="905" y="42" width="1.2" height="1.2" fill="#9ab0c0"/><rect x="905" y="45" width="1.2" height="1.2" fill="#9ab0c0"/><rect x="905" y="48" width="1.2" height="1.2" fill="#9ab0c0"/><rect x="905" y="51" width="1.2" height="1.2" fill="#9ab0c0"/><rect x="905" y="54" width="1.2" height="1.2" fill="#9ab0c0"/><rect x="911.5" y="35" width="22" height="22" fill="#cfe6f6" stroke="#7fa6c6"/><rect x="914.5" y="38" width="8" height="6" fill="#3a8a3a"/><path d="M918.5 44V50H926.5" stroke="#555" stroke-width="1.5" fill="none"/><rect x="923.5" y="48" width="7" height="6" fill="#3a8a3a"/><line x1="937.0" y1="37" x2="937.0" y2="55" stroke="#c0ccd4" stroke-width="1"/><circle cx="947" cy="49" r="4" fill="#555"/><circle cx="955" cy="49" r="4" fill="#555"/><rect x="945" y="41" width="4" height="7" fill="#555"/><rect x="953" y="41" width="4" height="7" fill="#555"/><path d="M967 53L977 42" stroke="#8a8a8a" stroke-width="2.5"/><path d="M974 40L980 44L978 46L973 43Z" fill="#8a8a8a"/><line x1="988.5" y1="37" x2="988.5" y2="55" stroke="#c0ccd4" stroke-width="1"/><path d="M997 39H1006L1010 43V54H997Z" fill="#f4f4f4" stroke="#8a8a8a"/><path d="M1000 47H1007M1003 44V51" stroke="#7a7a7a"/><rect x="1017" y="39" width="16" height="15" fill="none" stroke="#9a9a9a" stroke-width="1.5"/><path d="M1018 40L1032 53M1032 40L1018 53" stroke="#a0a0a0" stroke-width="1.3"/><rect x="1021" y="43" width="8" height="7" fill="none" stroke="#9a9a9a"/><path d="M1042 54V40H1049A4 4 0 0 1 1049 48H1043M1048 48L1053 54" fill="none" stroke="#a0a0a0" stroke-width="1.8"/><path d="M1051 39L1056 42L1052 45" fill="none" stroke="#8a8a8a" stroke-width="1.3"/><line x1="1062.5" y1="37" x2="1062.5" y2="55" stroke="#c0ccd4" stroke-width="1"/><path d="M1072 39H1081L1085 43V54H1072Z" fill="#f4f4f4" stroke="#8a8a8a"/><path d="M1075 47H1082M1078 44V51" stroke="#7a7a7a"/></svg>
<div class="a" style="left:0;top:25px;width:686px;height:447px;background:#a9a9a9;overflow:hidden">
</div>
<div class="a" style="left:0;top:25.5px;width:687px;height:23px;background:#1f0a2c"></div>
<svg class="a" style="left:0;top:40px" width="686" height="6"><line x1="0" y1="3" x2="560" y2="3" stroke="#6a4a7a" stroke-width="1" stroke-dasharray="1,6"/></svg>
<div class="a" style="left:3px;top:29.5px;font-size:12px;line-height:16px;color:#9c9c9c;white-space:nowrap">Digital Oscilloscope</div>
<svg class="a" style="left:671px;top:32px" width="10" height="10"><path d="M1.5 1.5L8.5 8.5M8.5 1.5L1.5 8.5" stroke="#b8b0c0" stroke-width="1.3"/></svg>
<div class="a" style="left:0;top:48.5px;width:686px;height:2px;background:#dcd6dc"></div>
<div class="a" style="left:0;top:50px;width:403px;height:406px;background:#c8c8c8"></div>
<svg class="a" style="left:0;top:0" width="686" height="472"><rect x="2" y="52" width="399.5" height="401" fill="#000"/><g stroke="#163816" stroke-width="1.5"><line x1="23.0" y1="52" x2="23.0" y2="453"/><line x1="2" y1="73.8" x2="401" y2="73.8"/><line x1="42.95" y1="52" x2="42.95" y2="453"/><line x1="2" y1="93.8" x2="401" y2="93.8"/><line x1="62.9" y1="52" x2="62.9" y2="453"/><line x1="2" y1="113.8" x2="401" y2="113.8"/><line x1="82.85" y1="52" x2="82.85" y2="453"/><line x1="2" y1="133.8" x2="401" y2="133.8"/><line x1="102.8" y1="52" x2="102.8" y2="453"/><line x1="2" y1="153.8" x2="401" y2="153.8"/><line x1="122.75" y1="52" x2="122.75" y2="453"/><line x1="2" y1="173.8" x2="401" y2="173.8"/><line x1="142.7" y1="52" x2="142.7" y2="453"/><line x1="2" y1="193.8" x2="401" y2="193.8"/><line x1="162.65" y1="52" x2="162.65" y2="453"/><line x1="2" y1="213.8" x2="401" y2="213.8"/><line x1="182.6" y1="52" x2="182.6" y2="453"/><line x1="2" y1="233.8" x2="401" y2="233.8"/><line x1="202.54999999999998" y1="52" x2="202.54999999999998" y2="453"/><line x1="2" y1="253.8" x2="401" y2="253.8"/><line x1="222.5" y1="52" x2="222.5" y2="453"/><line x1="2" y1="273.8" x2="401" y2="273.8"/><line x1="242.45" y1="52" x2="242.45" y2="453"/><line x1="2" y1="293.8" x2="401" y2="293.8"/><line x1="262.4" y1="52" x2="262.4" y2="453"/><line x1="2" y1="313.8" x2="401" y2="313.8"/><line x1="282.34999999999997" y1="52" x2="282.34999999999997" y2="453"/><line x1="2" y1="333.8" x2="401" y2="333.8"/><line x1="302.3" y1="52" x2="302.3" y2="453"/><line x1="2" y1="353.8" x2="401" y2="353.8"/><line x1="322.25" y1="52" x2="322.25" y2="453"/><line x1="2" y1="373.8" x2="401" y2="373.8"/><line x1="342.2" y1="52" x2="342.2" y2="453"/><line x1="2" y1="393.8" x2="401" y2="393.8"/><line x1="362.15" y1="52" x2="362.15" y2="453"/><line x1="2" y1="413.8" x2="401" y2="413.8"/><line x1="382.09999999999997" y1="52" x2="382.09999999999997" y2="453"/><line x1="2" y1="433.8" x2="401" y2="433.8"/></g><line x1="190.5" y1="52" x2="190.5" y2="453" stroke="#d0d0d0" stroke-width="1.2" stroke-dasharray="3.5,2.4"/><line x1="2" y1="213.8" x2="401.5" y2="213.8" stroke="#4fb3b3" stroke-width="1.8"/><line x1="2" y1="293.5" x2="401.5" y2="293.5" stroke="#8a3a48" stroke-width="1.6"/><line x1="2" y1="374" x2="401.5" y2="374" stroke="#2f8a2f" stroke-width="1.8"/><path d="M2 90.5L31 104V215.5C 80 201, 150 186, 200 182.5 S 300 175, 334 174 H395.5 V62 L401.5 66" fill="none" stroke="#d6d65a" stroke-width="1.8"/></svg>
<div class="a" style="left:0;top:456px;width:403px;height:16px;background:#f0f0f0"></div>
<div class="a" style="left:18px;top:457px;width:258px;height:14px;background:#cdcdcd"></div>
<svg class="a" style="left:0;top:456px" width="403" height="16"><path d="M11 4L7 8L11 12" stroke="#333" stroke-width="1.5" fill="none"/><path d="M392 4L396 8L392 12" stroke="#333" stroke-width="1.5" fill="none"/></svg>
<svg class="a" style="left:0;top:0" width="686" height="472"><rect x="403" y="50" width="283" height="422" fill="#a9a9a9"/><rect x="403" y="50" width="4" height="422" fill="#b8b8b8"/><line x1="406.5" y1="50" x2="406.5" y2="472" stroke="#d8d8d8" stroke-width="1.2"/><line x1="499.5" y1="50" x2="499.5" y2="472" stroke="#3a3a3a" stroke-width="1.3"/><line x1="501.2" y1="50" x2="501.2" y2="472" stroke="#dedede" stroke-width="1.3"/><line x1="592.5" y1="50" x2="592.5" y2="472" stroke="#3a3a3a" stroke-width="1.3"/><line x1="594.2" y1="50" x2="594.2" y2="472" stroke="#dedede" stroke-width="1.3"/><line x1="685.5" y1="50" x2="685.5" y2="472" stroke="#2a2a2a" stroke-width="1.5"/><line x1="407" y1="76" x2="685" y2="76" stroke="#c4c4c4" stroke-width="1.2"/><line x1="407" y1="288" x2="685" y2="288" stroke="#c4c4c4" stroke-width="1.2"/><line x1="407" y1="260.0" x2="685" y2="260.0" stroke="#8a8a8a" stroke-width="1"/><line x1="407" y1="262.0" x2="685" y2="262.0" stroke="#dadada" stroke-width="2"/><line x1="403" y1="50.5" x2="686" y2="50.5" stroke="#e0dce0" stroke-width="1.5"/><text x="453" y="68" font-size="11.5" font-weight="bold" text-anchor="middle" fill="#e58fb0" opacity="0.5">Trigger</text><text x="547" y="68" font-size="11.5" font-weight="bold" text-anchor="middle" fill="#e6e64a">Channel A</text><text x="640" y="68" font-size="11.5" font-weight="bold" text-anchor="middle" fill="#c8305e">Channel C</text><text x="453" y="280" font-size="11.5" font-weight="bold" text-anchor="middle" fill="#c9845c" textLength="61" lengthAdjust="spacingAndGlyphs">Horizontal</text><text x="547" y="280" font-size="11.5" font-weight="bold" text-anchor="middle" fill="#4a90d8">Channel B</text><text x="640" y="280" font-size="11.5" font-weight="bold" text-anchor="middle" fill="#3aa048">Channel D</text><text x="437" y="87" font-size="9" text-anchor="middle" fill="#555">Level</text><rect x="419" y="89" width="37" height="80" fill="#b4b4b4" stroke="#e0e0e0" stroke-width="1"/><path d="M419 89H456V169" fill="none" stroke="#2a2a2a" stroke-width="1.5"/><defs><linearGradient id="dg41989" x1="0" y1="0" x2="0" y2="1"><stop offset="0" stop-color="#4a4a4a"/><stop offset="0.5" stop-color="#f4f4f4"/><stop offset="1" stop-color="#3a3a3a"/></linearGradient></defs><rect x="426" y="92" width="24" height="75" fill="url(#dg41989)"/><g stroke="#222" stroke-width="0.8"><line x1="427" y1="95.0" x2="430" y2="95.0"/><line x1="446" y1="95.0" x2="449" y2="95.0"/><line x1="427" y1="100.0" x2="430" y2="100.0"/><line x1="446" y1="100.0" x2="449" y2="100.0"/><line x1="427" y1="105.0" x2="430" y2="105.0"/><line x1="446" y1="105.0" x2="449" y2="105.0"/><line x1="427" y1="110.0" x2="430" y2="110.0"/><line x1="446" y1="110.0" x2="449" y2="110.0"/><line x1="427" y1="115.0" x2="430" y2="115.0"/><line x1="446" y1="115.0" x2="449" y2="115.0"/><line x1="427" y1="120.0" x2="430" y2="120.0"/><line x1="446" y1="120.0" x2="449" y2="120.0"/><line x1="427" y1="125.0" x2="430" y2="125.0"/><line x1="446" y1="125.0" x2="449" y2="125.0"/><line x1="427" y1="130.0" x2="430" y2="130.0"/><line x1="446" y1="130.0" x2="449" y2="130.0"/><line x1="427" y1="135.0" x2="430" y2="135.0"/><line x1="446" y1="135.0" x2="449" y2="135.0"/><line x1="427" y1="140.0" x2="430" y2="140.0"/><line x1="446" y1="140.0" x2="449" y2="140.0"/><line x1="427" y1="145.0" x2="430" y2="145.0"/><line x1="446" y1="145.0" x2="449" y2="145.0"/><line x1="427" y1="150.0" x2="430" y2="150.0"/><line x1="446" y1="150.0" x2="449" y2="150.0"/><line x1="427" y1="155.0" x2="430" y2="155.0"/><line x1="446" y1="155.0" x2="449" y2="155.0"/><line x1="427" y1="160.0" x2="430" y2="160.0"/><line x1="446" y1="160.0" x2="449" y2="160.0"/><line x1="427" y1="165.0" x2="430" y2="165.0"/><line x1="446" y1="165.0" x2="449" y2="165.0"/></g><text x="438.0" y="111" font-size="9.5" text-anchor="middle" fill="#1a1a1a">-10</text><text x="438.0" y="132.5" font-size="9.5" text-anchor="middle" fill="#1a1a1a">0</text><text x="438.0" y="153" font-size="9.5" text-anchor="middle" fill="#1a1a1a">10</text><path d="M420 124.5L427 128.5L420 132.5Z" fill="#c01028"/><path d="M455 124.5L449 128.5L455 132.5Z" fill="#c01028"/><text x="481" y="92" font-size="9.5" text-anchor="end" fill="#222">AC</text><text x="481" y="106" font-size="9.5" text-anchor="end" fill="#444">DC</text><rect x="483" y="79.5" width="12.5" height="32" fill="#b0b0b0" stroke="#ececec"/><rect x="485" y="82" width="8" height="14" fill="#222"/><rect x="487" y="84" width="4" height="12" fill="#ddd"/><rect x="485" y="96" width="8" height="14" fill="#c8c8c8" stroke="#333" stroke-width="0.8"/><rect x="483" y="124" width="12.5" height="32" fill="#b0b0b0" stroke="#ececec"/><rect x="485" y="126" width="8" height="14" fill="#c8c8c8" stroke="#333" stroke-width="0.8"/><rect x="485" y="140" width="8" height="14" fill="#222"/><rect x="487" y="140" width="4" height="12" fill="#ddd"/><path d="M478 133V127H481M474 143H478V137" stroke="#222" stroke-width="1.2" fill="none"/><path d="M474 150H477V156H481" stroke="#222" stroke-width="1.2" fill="none"/><g opacity="0.45"><path d="M409.5 118L405.5 123H413.5Z M409.5 139L405.5 134H413.5Z" fill="#e9a0b8"/><line x1="409.5" y1="122" x2="409.5" y2="135" stroke="#e9a0b8" stroke-width="2"/></g><text x="481" y="180.5" font-size="9.5" text-anchor="end" fill="#222">Auto</text><text x="481" y="196.5" font-size="9.5" text-anchor="end" fill="#222">One-Shot</text><text x="481" y="213.0" font-size="9.5" text-anchor="end" fill="#222">Cursors</text><defs><linearGradient id="bg482.5170" x1="0" y1="0" x2="1" y2="1"><stop offset="0" stop-color="#fff"/><stop offset="1" stop-color="#e7b4c4"/></linearGradient></defs><rect x="482.5" y="170" width="13.5" height="13.5" fill="url(#bg482.5170)" stroke="#e6e6e6" stroke-width="1"/><path d="M482.5 183.5H496.0V170" stroke="#3a3a3a" fill="none"/><defs><linearGradient id="bg482.5186" x1="0" y1="0" x2="1" y2="1"><stop offset="0" stop-color="#9a9a9a"/><stop offset="0.5" stop-color="#555"/><stop offset="1" stop-color="#2e2e2e"/></linearGradient></defs><rect x="482.5" y="186" width="13.5" height="13.5" fill="url(#bg482.5186)" stroke="#e6e6e6" stroke-width="1"/><path d="M482.5 199.5H496.0V186" stroke="#3a3a3a" fill="none"/><defs><linearGradient id="bg482.5202.5" x1="0" y1="0" x2="1" y2="1"><stop offset="0" stop-color="#9a9a9a"/><stop offset="0.5" stop-color="#555"/><stop offset="1" stop-color="#2e2e2e"/></linearGradient></defs><rect x="482.5" y="202.5" width="13.5" height="13.5" fill="url(#bg482.5202.5)" stroke="#e6e6e6" stroke-width="1"/><path d="M482.5 216.0H496.0V202.5" stroke="#3a3a3a" fill="none"/><text x="452" y="231" font-size="9" text-anchor="middle" fill="#333">Source</text><text x="431" y="243" font-size="8.5" font-weight="bold" text-anchor="middle" fill="#e6e64a">A</text><text x="446" y="243" font-size="8.5" font-weight="bold" text-anchor="middle" fill="#4a90d8">B</text><text x="460" y="243" font-size="8.5" font-weight="bold" text-anchor="middle" fill="#c8308e">C</text><text x="474" y="243" font-size="8.5" font-weight="bold" text-anchor="middle" fill="#3aa048">D</text><rect x="420" y="244.5" width="63" height="13.5" fill="#b0b0b0" stroke="#eaeaea"/><rect x="436" y="249.5" width="43" height="3" fill="#111"/><rect x="422" y="246" width="13" height="11" fill="#d0d0d0" stroke="#333" stroke-width="0.8"/><path d="M425 248V255M428 248V255M431 248V255" stroke="#444"/><text x="530" y="86.5" font-size="9" text-anchor="middle" fill="#333">Position</text><rect x="510.5" y="89" width="39.5" height="79" fill="#b4b4b4" stroke="#e0e0e0" stroke-width="1"/><path d="M510.5 89H550V168" fill="none" stroke="#2a2a2a" stroke-width="1.5"/><defs><linearGradient id="dg510.589" x1="0" y1="0" x2="0" y2="1"><stop offset="0" stop-color="#4a4a4a"/><stop offset="0.5" stop-color="#f4f4f4"/><stop offset="1" stop-color="#3a3a3a"/></linearGradient></defs><rect x="517.5" y="92" width="26.5" height="74" fill="url(#dg510.589)"/><g stroke="#222" stroke-width="0.8"><line x1="518.5" y1="95.0" x2="521.5" y2="95.0"/><line x1="540" y1="95.0" x2="543" y2="95.0"/><line x1="518.5" y1="100.0" x2="521.5" y2="100.0"/><line x1="540" y1="100.0" x2="543" y2="100.0"/><line x1="518.5" y1="105.0" x2="521.5" y2="105.0"/><line x1="540" y1="105.0" x2="543" y2="105.0"/><line x1="518.5" y1="110.0" x2="521.5" y2="110.0"/><line x1="540" y1="110.0" x2="543" y2="110.0"/><line x1="518.5" y1="115.0" x2="521.5" y2="115.0"/><line x1="540" y1="115.0" x2="543" y2="115.0"/><line x1="518.5" y1="120.0" x2="521.5" y2="120.0"/><line x1="540" y1="120.0" x2="543" y2="120.0"/><line x1="518.5" y1="125.0" x2="521.5" y2="125.0"/><line x1="540" y1="125.0" x2="543" y2="125.0"/><line x1="518.5" y1="130.0" x2="521.5" y2="130.0"/><line x1="540" y1="130.0" x2="543" y2="130.0"/><line x1="518.5" y1="135.0" x2="521.5" y2="135.0"/><line x1="540" y1="135.0" x2="543" y2="135.0"/><line x1="518.5" y1="140.0" x2="521.5" y2="140.0"/><line x1="540" y1="140.0" x2="543" y2="140.0"/><line x1="518.5" y1="145.0" x2="521.5" y2="145.0"/><line x1="540" y1="145.0" x2="543" y2="145.0"/><line x1="518.5" y1="150.0" x2="521.5" y2="150.0"/><line x1="540" y1="150.0" x2="543" y2="150.0"/><line x1="518.5" y1="155.0" x2="521.5" y2="155.0"/><line x1="540" y1="155.0" x2="543" y2="155.0"/><line x1="518.5" y1="160.0" x2="521.5" y2="160.0"/><line x1="540" y1="160.0" x2="543" y2="160.0"/></g><text x="530.75" y="103" font-size="9.5" text-anchor="middle" fill="#1a1a1a">70</text><text x="530.75" y="123.5" font-size="9.5" text-anchor="middle" fill="#1a1a1a">60</text><text x="530.75" y="143.5" font-size="9.5" text-anchor="middle" fill="#1a1a1a">50</text><text x="530.75" y="164" font-size="9.5" text-anchor="middle" fill="#1a1a1a">100</text><path d="M511.5 123.6L518.5 127.6L511.5 131.6Z" fill="#c01028"/><path d="M549 123.6L543 127.6L549 131.6Z" fill="#c01028"/><path d="M505 118L501 123H509Z M505 137L501 132H509Z" fill="#e6e64a"/><line x1="505" y1="122" x2="505" y2="133" stroke="#e6e64a" stroke-width="2"/><text x="574" y="93" font-size="9.5" text-anchor="end" fill="#222">AC</text><text x="574" y="107" font-size="9.5" text-anchor="end" fill="#7c7c7c">DC</text><text x="574" y="121" font-size="9.5" text-anchor="end" fill="#222">GND</text><text x="574" y="135" font-size="9.5" text-anchor="end" fill="#3a3a3a">OFF</text><rect x="577" y="80" width="13" height="61" fill="#a8a8a8" stroke="#eaeaea"/><rect x="582.0" y="86" width="3" height="51" fill="#111"/><rect x="585.0" y="86" width="1" height="51" fill="#f0f0f0"/><rect x="578" y="81" width="11" height="14" fill="#c8c8c8" stroke="#222" stroke-width="1"/><path d="M580 85H587M580 88H587M580 91H587" stroke="#777" stroke-width="0.9"/><text x="575" y="154.5" font-size="9.5" text-anchor="end" fill="#333">Invert</text><defs><linearGradient id="bg577144.5" x1="0" y1="0" x2="1" y2="1"><stop offset="0" stop-color="#9a9a9a"/><stop offset="0.5" stop-color="#555"/><stop offset="1" stop-color="#2e2e2e"/></linearGradient></defs><rect x="577" y="144.5" width="13.5" height="14" fill="url(#bg577144.5)" stroke="#e6e6e6" stroke-width="1"/><path d="M577 158.5H590.5V144.5" stroke="#3a3a3a" fill="none"/><text x="575" y="172" font-size="9.5" text-anchor="end" fill="#333">A+B</text><defs><linearGradient id="bg577161.5" x1="0" y1="0" x2="1" y2="1"><stop offset="0" stop-color="#9a9a9a"/><stop offset="0.5" stop-color="#555"/><stop offset="1" stop-color="#2e2e2e"/></linearGradient></defs><rect x="577" y="161.5" width="13.5" height="14" fill="url(#bg577161.5)" stroke="#e6e6e6" stroke-width="1"/><path d="M577 175.5H590.5V161.5" stroke="#3a3a3a" fill="none"/><path d="M503.2 258V215.75A43.150000000000006 43.150000000000006 0 0 1 589.5 215.75V258Z" fill="#fff"/><path d="M503.2 258V215.75A43.150000000000006 43.150000000000006 0 0 1 589.5 215.75" fill="none" stroke="#e8e8e8" stroke-width="1"/><rect x="527.5" y="234.5" width="37.0" height="23.5" fill="#a9a9a9"/><line x1="527.5" y1="234.5" x2="527.5" y2="258" stroke="#9a9a9a" stroke-width="1"/><line x1="564.5" y1="234.5" x2="564.5" y2="258" stroke="#e0e0e0" stroke-width="1"/><text x="546.0" y="179.3" font-size="7.8" text-anchor="middle" fill="#2a2a2a">0.2</text><line x1="546.0" y1="185.5" x2="546.0" y2="181.5" stroke="#1a1a1a" stroke-width="1.3"/><text x="531.5" y="182.2" font-size="7.8" text-anchor="middle" fill="#2a2a2a">0.1</text><line x1="534.9" y1="187.7" x2="533.4" y2="184.0" stroke="#1a1a1a" stroke-width="1.3"/><text x="560.5" y="182.2" font-size="7.8" text-anchor="middle" fill="#2a2a2a">0.5</text><line x1="557.1" y1="187.7" x2="558.6" y2="184.0" stroke="#1a1a1a" stroke-width="1.3"/><text x="519.1" y="190.4" font-size="7.8" text-anchor="middle" fill="#2a2a2a">1</text><line x1="525.5" y1="194.0" x2="522.7" y2="191.2" stroke="#1a1a1a" stroke-width="1.3"/><text x="510.9" y="202.8" font-size="7.8" text-anchor="middle" fill="#2a2a2a">2</text><line x1="519.2" y1="203.4" x2="515.5" y2="201.9" stroke="#1a1a1a" stroke-width="1.3"/><text x="508.0" y="217.3" font-size="7.8" text-anchor="middle" fill="#2a2a2a">5</text><line x1="517.0" y1="214.5" x2="513.0" y2="214.5" stroke="#1a1a1a" stroke-width="1.3"/><text x="510.9" y="231.8" font-size="7.8" text-anchor="middle" fill="#2a2a2a">10</text><line x1="519.2" y1="225.6" x2="515.5" y2="227.1" stroke="#1a1a1a" stroke-width="1.3"/><text x="519.1" y="244.2" font-size="7.8" text-anchor="middle" fill="#2a2a2a">20</text><line x1="525.5" y1="235.0" x2="522.7" y2="237.8" stroke="#1a1a1a" stroke-width="1.3"/><text x="572.9" y="190.4" font-size="7.8" text-anchor="middle" fill="#2a2a2a">50</text><line x1="566.5" y1="194.0" x2="569.3" y2="191.2" stroke="#1a1a1a" stroke-width="1.3"/><text x="581.1" y="202.8" font-size="7.8" text-anchor="middle" fill="#2a2a2a">20</text><line x1="572.8" y1="203.4" x2="576.5" y2="201.9" stroke="#1a1a1a" stroke-width="1.3"/><text x="584.0" y="217.3" font-size="7.8" text-anchor="middle" fill="#2a2a2a">10</text><line x1="575.0" y1="214.5" x2="579.0" y2="214.5" stroke="#1a1a1a" stroke-width="1.3"/><text x="581.1" y="231.8" font-size="7.8" text-anchor="middle" fill="#2a2a2a">5</text><line x1="572.8" y1="225.6" x2="576.5" y2="227.1" stroke="#1a1a1a" stroke-width="1.3"/><text x="572.9" y="244.2" font-size="7.8" text-anchor="middle" fill="#2a2a2a">2</text><line x1="566.5" y1="235.0" x2="569.3" y2="237.8" stroke="#1a1a1a" stroke-width="1.3"/><defs><radialGradient id="kg503172o" cx="0.42" cy="0.3" r="0.75"><stop offset="0" stop-color="#dcdcdc"/><stop offset="0.55" stop-color="#a4a4a4"/><stop offset="1" stop-color="#5e5e5e"/></radialGradient><linearGradient id="kg503172i" x1="0" y1="0" x2="1" y2="1"><stop offset="0" stop-color="#7a7a7a"/><stop offset="0.45" stop-color="#f4f4f4"/><stop offset="0.55" stop-color="#c8c8c8"/><stop offset="1" stop-color="#8a8a8a"/></linearGradient></defs><circle cx="546" cy="214.5" r="29.3" fill="url(#kg503172o)" stroke="#4a4a4a" stroke-width="1"/><circle cx="546" cy="215.0" r="15.5" fill="url(#kg503172i)" stroke="#3a3a3a" stroke-width="1.4"/><path d="M535.5 189.6L533.1 199.4L544.1 194.7Z" fill="#e4e43a" stroke="#e4e43a" stroke-width="1.5" stroke-linejoin="round"/><circle cx="544.8" cy="205.0" r="2.6" fill="#e4e43a"/><rect x="527.5" y="246" width="37.0" height="12" fill="#fff"/><path d="M528.3 258V246" stroke="#111" stroke-width="1.6"/><path d="M527.5 246H564.5" stroke="#c8c8c8" stroke-width="1"/><text x="531.0" y="255.5" font-size="9" fill="#333">0.0</text><text x="515.4" y="256" font-size="9.5" text-anchor="middle" fill="#222">V</text><text x="577.0" y="256" font-size="9.5" text-anchor="middle" fill="#222">mV</text><text x="623" y="86.5" font-size="9" text-anchor="middle" fill="#333">Position</text><rect x="604.5" y="89" width="39.0" height="79" fill="#b4b4b4" stroke="#e0e0e0" stroke-width="1"/><path d="M604.5 89H643.5V168" fill="none" stroke="#2a2a2a" stroke-width="1.5"/><defs><linearGradient id="dg604.589" x1="0" y1="0" x2="0" y2="1"><stop offset="0" stop-color="#4a4a4a"/><stop offset="0.5" stop-color="#f4f4f4"/><stop offset="1" stop-color="#3a3a3a"/></linearGradient></defs><rect x="611.5" y="92" width="26.0" height="74" fill="url(#dg604.589)"/><g stroke="#222" stroke-width="0.8"><line x1="612.5" y1="95.0" x2="615.5" y2="95.0"/><line x1="633.5" y1="95.0" x2="636.5" y2="95.0"/><line x1="612.5" y1="100.0" x2="615.5" y2="100.0"/><line x1="633.5" y1="100.0" x2="636.5" y2="100.0"/><line x1="612.5" y1="105.0" x2="615.5" y2="105.0"/><line x1="633.5" y1="105.0" x2="636.5" y2="105.0"/><line x1="612.5" y1="110.0" x2="615.5" y2="110.0"/><line x1="633.5" y1="110.0" x2="636.5" y2="110.0"/><line x1="612.5" y1="115.0" x2="615.5" y2="115.0"/><line x1="633.5" y1="115.0" x2="636.5" y2="115.0"/><line x1="612.5" y1="120.0" x2="615.5" y2="120.0"/><line x1="633.5" y1="120.0" x2="636.5" y2="120.0"/><line x1="612.5" y1="125.0" x2="615.5" y2="125.0"/><line x1="633.5" y1="125.0" x2="636.5" y2="125.0"/><line x1="612.5" y1="130.0" x2="615.5" y2="130.0"/><line x1="633.5" y1="130.0" x2="636.5" y2="130.0"/><line x1="612.5" y1="135.0" x2="615.5" y2="135.0"/><line x1="633.5" y1="135.0" x2="636.5" y2="135.0"/><line x1="612.5" y1="140.0" x2="615.5" y2="140.0"/><line x1="633.5" y1="140.0" x2="636.5" y2="140.0"/><line x1="612.5" y1="145.0" x2="615.5" y2="145.0"/><line x1="633.5" y1="145.0" x2="636.5" y2="145.0"/><line x1="612.5" y1="150.0" x2="615.5" y2="150.0"/><line x1="633.5" y1="150.0" x2="636.5" y2="150.0"/><line x1="612.5" y1="155.0" x2="615.5" y2="155.0"/><line x1="633.5" y1="155.0" x2="636.5" y2="155.0"/><line x1="612.5" y1="160.0" x2="615.5" y2="160.0"/><line x1="633.5" y1="160.0" x2="636.5" y2="160.0"/></g><text x="624.5" y="112" font-size="9.5" text-anchor="middle" fill="#1a1a1a">-50</text><text x="624.5" y="132.5" font-size="9.5" text-anchor="middle" fill="#1a1a1a">-40</text><text x="624.5" y="152" font-size="9.5" text-anchor="middle" fill="#1a1a1a">-30</text><path d="M605.5 124.5L612.5 128.5L605.5 132.5Z" fill="#c01028"/><path d="M642.5 124.5L636.5 128.5L642.5 132.5Z" fill="#c01028"/><path d="M599 118L595 123H603Z M599 138L595 133H603Z" fill="#b0306e"/><line x1="599" y1="122" x2="599" y2="134" stroke="#b0306e" stroke-width="2"/><text x="667" y="94" font-size="9.5" text-anchor="end" fill="#222">AC</text><text x="667" y="108" font-size="9.5" text-anchor="end" fill="#7c7c7c">DC</text><text x="667" y="122" font-size="9.5" text-anchor="end" fill="#222">GND</text><text x="667" y="135" font-size="9.5" text-anchor="end" fill="#3a3a3a">OFF</text><rect x="671" y="80" width="13" height="61" fill="#a8a8a8" stroke="#eaeaea"/><rect x="676.0" y="86" width="3" height="51" fill="#111"/><rect x="679.0" y="86" width="1" height="51" fill="#f0f0f0"/><rect x="672" y="81" width="11" height="14" fill="#c8c8c8" stroke="#222" stroke-width="1"/><path d="M674 85H681M674 88H681M674 91H681" stroke="#777" stroke-width="0.9"/><text x="669" y="154.5" font-size="9.5" text-anchor="end" fill="#333">Invert</text><defs><linearGradient id="bg671144.5" x1="0" y1="0" x2="1" y2="1"><stop offset="0" stop-color="#9a9a9a"/><stop offset="0.5" stop-color="#555"/><stop offset="1" stop-color="#2e2e2e"/></linearGradient></defs><rect x="671" y="144.5" width="13.5" height="14" fill="url(#bg671144.5)" stroke="#e6e6e6" stroke-width="1"/><path d="M671 158.5H684.5V144.5" stroke="#3a3a3a" fill="none"/><text x="669" y="171" font-size="9.5" text-anchor="end" fill="#333">C+D</text><defs><linearGradient id="bg671161" x1="0" y1="0" x2="1" y2="1"><stop offset="0" stop-color="#9a9a9a"/><stop offset="0.5" stop-color="#555"/><stop offset="1" stop-color="#2e2e2e"/></linearGradient></defs><rect x="671" y="161" width="13.5" height="13.5" fill="url(#bg671161)" stroke="#e6e6e6" stroke-width="1"/><path d="M671 174.5H684.5V161" stroke="#3a3a3a" fill="none"/><path d="M596 258V216.6A44.0 44.0 0 0 1 684 216.6V258Z" fill="#fff"/><path d="M596 258V216.6A44.0 44.0 0 0 1 684 216.6" fill="none" stroke="#e8e8e8" stroke-width="1"/><rect x="621.5" y="235" width="37.0" height="23" fill="#a9a9a9"/><line x1="621.5" y1="235" x2="621.5" y2="258" stroke="#9a9a9a" stroke-width="1"/><line x1="658.5" y1="235" x2="658.5" y2="258" stroke="#e0e0e0" stroke-width="1"/><text x="640.0" y="179.8" font-size="7.8" text-anchor="middle" fill="#2a2a2a">0.2</text><line x1="640.0" y1="186.0" x2="640.0" y2="182.0" stroke="#1a1a1a" stroke-width="1.3"/><text x="625.5" y="182.7" font-size="7.8" text-anchor="middle" fill="#2a2a2a">0.1</text><line x1="628.9" y1="188.2" x2="627.4" y2="184.5" stroke="#1a1a1a" stroke-width="1.3"/><text x="654.5" y="182.7" font-size="7.8" text-anchor="middle" fill="#2a2a2a">0.5</text><line x1="651.1" y1="188.2" x2="652.6" y2="184.5" stroke="#1a1a1a" stroke-width="1.3"/><text x="613.1" y="190.9" font-size="7.8" text-anchor="middle" fill="#2a2a2a">1</text><line x1="619.5" y1="194.5" x2="616.7" y2="191.7" stroke="#1a1a1a" stroke-width="1.3"/><text x="604.9" y="203.3" font-size="7.8" text-anchor="middle" fill="#2a2a2a">2</text><line x1="613.2" y1="203.9" x2="609.5" y2="202.4" stroke="#1a1a1a" stroke-width="1.3"/><text x="602.0" y="217.8" font-size="7.8" text-anchor="middle" fill="#2a2a2a">5</text><line x1="611.0" y1="215.0" x2="607.0" y2="215.0" stroke="#1a1a1a" stroke-width="1.3"/><text x="604.9" y="232.3" font-size="7.8" text-anchor="middle" fill="#2a2a2a">10</text><line x1="613.2" y1="226.1" x2="609.5" y2="227.6" stroke="#1a1a1a" stroke-width="1.3"/><text x="613.1" y="244.7" font-size="7.8" text-anchor="middle" fill="#2a2a2a">20</text><line x1="619.5" y1="235.5" x2="616.7" y2="238.3" stroke="#1a1a1a" stroke-width="1.3"/><text x="666.9" y="190.9" font-size="7.8" text-anchor="middle" fill="#2a2a2a">50</text><line x1="660.5" y1="194.5" x2="663.3" y2="191.7" stroke="#1a1a1a" stroke-width="1.3"/><text x="675.1" y="203.3" font-size="7.8" text-anchor="middle" fill="#2a2a2a">20</text><line x1="666.8" y1="203.9" x2="670.5" y2="202.4" stroke="#1a1a1a" stroke-width="1.3"/><text x="678.0" y="217.8" font-size="7.8" text-anchor="middle" fill="#2a2a2a">10</text><line x1="669.0" y1="215.0" x2="673.0" y2="215.0" stroke="#1a1a1a" stroke-width="1.3"/><text x="675.1" y="232.3" font-size="7.8" text-anchor="middle" fill="#2a2a2a">5</text><line x1="666.8" y1="226.1" x2="670.5" y2="227.6" stroke="#1a1a1a" stroke-width="1.3"/><text x="666.9" y="244.7" font-size="7.8" text-anchor="middle" fill="#2a2a2a">2</text><line x1="660.5" y1="235.5" x2="663.3" y2="238.3" stroke="#1a1a1a" stroke-width="1.3"/><defs><radialGradient id="kg596172o" cx="0.42" cy="0.3" r="0.75"><stop offset="0" stop-color="#dcdcdc"/><stop offset="0.55" stop-color="#a4a4a4"/><stop offset="1" stop-color="#5e5e5e"/></radialGradient><linearGradient id="kg596172i" x1="0" y1="0" x2="1" y2="1"><stop offset="0" stop-color="#7a7a7a"/><stop offset="0.45" stop-color="#f4f4f4"/><stop offset="0.55" stop-color="#c8c8c8"/><stop offset="1" stop-color="#8a8a8a"/></linearGradient></defs><circle cx="640" cy="215" r="29.3" fill="url(#kg596172o)" stroke="#4a4a4a" stroke-width="1"/><circle cx="640" cy="215.5" r="15.5" fill="url(#kg596172i)" stroke="#3a3a3a" stroke-width="1.4"/><path d="M613.0 215.0L621.0 221.0L621.0 209.0Z" fill="#b02a6a" stroke="#b02a6a" stroke-width="1.5" stroke-linejoin="round"/><circle cx="647.2" cy="222.6" r="2.6" fill="#b02a6a"/><rect x="621.5" y="246" width="37.0" height="12" fill="#fff"/><path d="M622.3 258V246" stroke="#111" stroke-width="1.6"/><path d="M621.5 246H658.5" stroke="#c8c8c8" stroke-width="1"/><text x="625.0" y="255.5" font-size="9" fill="#333">5</text><text x="608.8" y="256" font-size="9.5" text-anchor="middle" fill="#222">V</text><text x="671.2" y="256" font-size="9.5" text-anchor="middle" fill="#222">mV</text><text x="452" y="301" font-size="9" text-anchor="middle" fill="#333">Source</text><text x="438" y="311" font-size="8.5" font-weight="bold" text-anchor="middle" fill="#e6e64a">A</text><text x="452" y="311" font-size="8.5" font-weight="bold" text-anchor="middle" fill="#4a90d8">B</text><text x="467" y="311" font-size="8.5" font-weight="bold" text-anchor="middle" fill="#c8308e">C</text><text x="481" y="311" font-size="8.5" font-weight="bold" text-anchor="middle" fill="#3aa048">D</text><path d="M420 311L428 304" stroke="#d08050" stroke-width="2"/><rect x="414" y="314" width="77" height="14.5" fill="#b0b0b0" stroke="#eaeaea"/><rect x="430" y="318" width="57" height="3" fill="#111"/><rect x="416" y="316" width="13" height="11" fill="#d0d0d0" stroke="#333" stroke-width="0.8"/><path d="M419 318V326M422 318V326M425 318V326" stroke="#444"/><text x="452" y="340" font-size="9" text-anchor="middle" fill="#333">Position</text><defs><linearGradient id="hdg" x1="0" y1="0" x2="1" y2="0"><stop offset="0" stop-color="#3e3e3e"/><stop offset="0.5" stop-color="#f2f2f2"/><stop offset="1" stop-color="#3e3e3e"/></linearGradient></defs><rect x="412.5" y="342.5" width="81" height="39" fill="#b0b0b0" stroke="#e6e6e6"/><path d="M412.5 342.5H493.5V381.5" stroke="#222" fill="none" stroke-width="1.3"/><rect x="414.5" y="350" width="75.5" height="24" fill="url(#hdg)"/><g stroke="#222" stroke-width="0.8"><line x1="416" y1="351" x2="416" y2="354"/><line x1="416" y1="370" x2="416" y2="373"/><line x1="420" y1="351" x2="420" y2="354"/><line x1="420" y1="370" x2="420" y2="373"/><line x1="424" y1="351" x2="424" y2="354"/><line x1="424" y1="370" x2="424" y2="373"/><line x1="428" y1="351" x2="428" y2="354"/><line x1="428" y1="370" x2="428" y2="373"/><line x1="432" y1="351" x2="432" y2="354"/><line x1="432" y1="370" x2="432" y2="373"/><line x1="436" y1="351" x2="436" y2="354"/><line x1="436" y1="370" x2="436" y2="373"/><line x1="440" y1="351" x2="440" y2="354"/><line x1="440" y1="370" x2="440" y2="373"/><line x1="444" y1="351" x2="444" y2="354"/><line x1="444" y1="370" x2="444" y2="373"/><line x1="448" y1="351" x2="448" y2="354"/><line x1="448" y1="370" x2="448" y2="373"/><line x1="452" y1="351" x2="452" y2="354"/><line x1="452" y1="370" x2="452" y2="373"/><line x1="456" y1="351" x2="456" y2="354"/><line x1="456" y1="370" x2="456" y2="373"/><line x1="460" y1="351" x2="460" y2="354"/><line x1="460" y1="370" x2="460" y2="373"/><line x1="464" y1="351" x2="464" y2="354"/><line x1="464" y1="370" x2="464" y2="373"/><line x1="468" y1="351" x2="468" y2="354"/><line x1="468" y1="370" x2="468" y2="373"/><line x1="472" y1="351" x2="472" y2="354"/><line x1="472" y1="370" x2="472" y2="373"/><line x1="476" y1="351" x2="476" y2="354"/><line x1="476" y1="370" x2="476" y2="373"/><line x1="480" y1="351" x2="480" y2="354"/><line x1="480" y1="370" x2="480" y2="373"/><line x1="484" y1="351" x2="484" y2="354"/><line x1="484" y1="370" x2="484" y2="373"/><line x1="488" y1="351" x2="488" y2="354"/><line x1="488" y1="370" x2="488" y2="373"/></g><text x="425" y="366" font-size="9.5" text-anchor="middle" fill="#1a1a1a">200</text><text x="451" y="366" font-size="9.5" text-anchor="middle" fill="#1a1a1a">150</text><text x="475" y="366" font-size="9.5" text-anchor="middle" fill="#1a1a1a">100</text><text x="489" y="366" font-size="9.5" text-anchor="middle" fill="#1a1a1a">11</text><path d="M446 344H456L451 349Z M446 381H456L451 376Z" fill="#c01028"/><path d="M410.2 470V426.4A42.5 42.5 0 0 1 495.2 426.4V470Z" fill="#fff"/><path d="M410.2 470V426.4A42.5 42.5 0 0 1 495.2 426.4" fill="none" stroke="#e8e8e8" stroke-width="1"/><rect x="435.7" y="447.5" width="34.69999999999999" height="22.5" fill="#a9a9a9"/><line x1="435.7" y1="447.5" x2="435.7" y2="470" stroke="#9a9a9a" stroke-width="1"/><line x1="470.4" y1="447.5" x2="470.4" y2="470" stroke="#e0e0e0" stroke-width="1"/><g stroke="#333" stroke-width="0.8"><line x1="472.3" y1="450.5" x2="474.2" y2="452.8"/><line x1="474.6" y1="448.3" x2="476.7" y2="450.4"/><line x1="476.6" y1="446.0" x2="479.0" y2="447.8"/><line x1="478.4" y1="443.4" x2="481.0" y2="445.0"/><line x1="480.0" y1="440.7" x2="482.7" y2="442.0"/><line x1="481.2" y1="437.8" x2="484.0" y2="438.8"/><line x1="482.1" y1="434.8" x2="485.0" y2="435.5"/><line x1="482.7" y1="431.7" x2="485.7" y2="432.1"/><line x1="483.0" y1="428.5" x2="486.0" y2="428.7"/><line x1="482.9" y1="425.4" x2="485.9" y2="425.2"/><line x1="482.5" y1="422.3" x2="485.5" y2="421.8"/><line x1="481.8" y1="419.2" x2="484.7" y2="418.4"/><line x1="480.8" y1="416.3" x2="483.6" y2="415.1"/><line x1="479.5" y1="413.4" x2="482.1" y2="412.0"/><line x1="477.9" y1="410.7" x2="480.4" y2="409.0"/><line x1="476.0" y1="408.2" x2="478.3" y2="406.3"/><line x1="473.8" y1="405.9" x2="475.9" y2="403.8"/><line x1="471.5" y1="403.9" x2="473.3" y2="401.5"/><line x1="468.9" y1="402.1" x2="470.5" y2="399.5"/><line x1="466.2" y1="400.5" x2="467.5" y2="397.8"/><line x1="463.3" y1="399.3" x2="464.3" y2="396.5"/><line x1="460.3" y1="398.4" x2="461.0" y2="395.5"/><line x1="457.2" y1="397.8" x2="457.6" y2="394.8"/><line x1="454.0" y1="397.5" x2="454.2" y2="394.5"/><line x1="450.9" y1="397.6" x2="450.7" y2="394.6"/><line x1="447.8" y1="398.0" x2="447.3" y2="395.0"/><line x1="444.7" y1="398.7" x2="443.9" y2="395.8"/><line x1="441.8" y1="399.7" x2="440.6" y2="396.9"/><line x1="438.9" y1="401.0" x2="437.5" y2="398.4"/><line x1="436.2" y1="402.6" x2="434.5" y2="400.1"/><line x1="433.7" y1="404.5" x2="431.8" y2="402.2"/><line x1="431.4" y1="406.7" x2="429.3" y2="404.6"/><line x1="429.4" y1="409.0" x2="427.0" y2="407.2"/><line x1="427.6" y1="411.6" x2="425.0" y2="410.0"/><line x1="426.0" y1="414.3" x2="423.3" y2="413.0"/><line x1="424.8" y1="417.2" x2="422.0" y2="416.2"/><line x1="423.9" y1="420.2" x2="421.0" y2="419.5"/><line x1="423.3" y1="423.3" x2="420.3" y2="422.9"/><line x1="423.0" y1="426.5" x2="420.0" y2="426.3"/><line x1="423.1" y1="429.6" x2="420.1" y2="429.8"/><line x1="423.5" y1="432.7" x2="420.5" y2="433.2"/><line x1="424.2" y1="435.8" x2="421.3" y2="436.6"/><line x1="425.2" y1="438.7" x2="422.4" y2="439.9"/><line x1="426.5" y1="441.6" x2="423.9" y2="443.0"/><line x1="428.1" y1="444.3" x2="425.6" y2="446.0"/><line x1="430.0" y1="446.8" x2="427.7" y2="448.7"/><line x1="432.2" y1="449.1" x2="430.1" y2="451.2"/><line x1="434.5" y1="451.1" x2="432.7" y2="453.5"/></g><text x="426.4" y="458.8" font-size="7.8" text-anchor="middle" fill="#2a2a2a">200</text><line x1="433.2" y1="448.7" x2="430.5" y2="451.6" stroke="#1a1a1a" stroke-width="1.3"/><text x="419.2" y="449.8" font-size="7.8" text-anchor="middle" fill="#2a2a2a">100</text><line x1="427.9" y1="442.0" x2="424.4" y2="444.0" stroke="#1a1a1a" stroke-width="1.3"/><text x="415.2" y="439.7" font-size="7.8" text-anchor="middle" fill="#2a2a2a">50</text><line x1="424.9" y1="434.5" x2="421.0" y2="435.5" stroke="#1a1a1a" stroke-width="1.3"/><text x="414.1" y="428.3" font-size="7.8" text-anchor="middle" fill="#2a2a2a">20</text><line x1="424.0" y1="426.0" x2="420.0" y2="425.8" stroke="#1a1a1a" stroke-width="1.3"/><text x="415.7" y="418.9" font-size="7.8" text-anchor="middle" fill="#2a2a2a">10</text><line x1="425.3" y1="419.0" x2="421.4" y2="417.9" stroke="#1a1a1a" stroke-width="1.3"/><text x="420.7" y="408.5" font-size="7.8" text-anchor="middle" fill="#2a2a2a">5</text><line x1="429.0" y1="411.3" x2="425.6" y2="409.0" stroke="#1a1a1a" stroke-width="1.3"/><text x="428.5" y="400.0" font-size="7.8" text-anchor="middle" fill="#2a2a2a">2</text><line x1="434.7" y1="405.0" x2="432.2" y2="401.9" stroke="#1a1a1a" stroke-width="1.3"/><text x="438.4" y="394.1" font-size="7.8" text-anchor="middle" fill="#2a2a2a">1</text><line x1="442.1" y1="400.6" x2="440.6" y2="396.9" stroke="#1a1a1a" stroke-width="1.3"/><text x="446.2" y="391.9" font-size="7.8" text-anchor="middle" fill="#2a2a2a">0.5</text><line x1="448.0" y1="398.9" x2="447.3" y2="395.0" stroke="#1a1a1a" stroke-width="1.3"/><text x="453.0" y="391.3" font-size="7.8" text-anchor="middle" fill="#2a2a2a">0.2</text><line x1="453.0" y1="398.5" x2="453.0" y2="394.5" stroke="#1a1a1a" stroke-width="1.3"/><text x="459.8" y="391.9" font-size="7.8" text-anchor="middle" fill="#2a2a2a">0.1</text><line x1="458.0" y1="398.9" x2="458.7" y2="395.0" stroke="#1a1a1a" stroke-width="1.3"/><text x="466.3" y="393.7" font-size="7.8" text-anchor="middle" fill="#2a2a2a">0.5</text><line x1="462.9" y1="400.2" x2="464.3" y2="396.5" stroke="#1a1a1a" stroke-width="1.3"/><text x="477.0" y="399.6" font-size="7.8" text-anchor="middle" fill="#2a2a2a">50</text><line x1="470.9" y1="404.6" x2="473.3" y2="401.5" stroke="#1a1a1a" stroke-width="1.3"/><text x="484.9" y="407.9" font-size="7.8" text-anchor="middle" fill="#2a2a2a">20</text><line x1="476.8" y1="410.9" x2="480.0" y2="408.6" stroke="#1a1a1a" stroke-width="1.3"/><text x="490.1" y="418.2" font-size="7.8" text-anchor="middle" fill="#2a2a2a">10</text><line x1="480.6" y1="418.5" x2="484.4" y2="417.3" stroke="#1a1a1a" stroke-width="1.3"/><text x="492.0" y="428.9" font-size="7.8" text-anchor="middle" fill="#2a2a2a">5</text><line x1="482.0" y1="426.5" x2="486.0" y2="426.3" stroke="#1a1a1a" stroke-width="1.3"/><text x="491.0" y="439.1" font-size="7.8" text-anchor="middle" fill="#2a2a2a">2</text><line x1="481.3" y1="434.0" x2="485.2" y2="434.9" stroke="#1a1a1a" stroke-width="1.3"/><text x="487.1" y="449.2" font-size="7.8" text-anchor="middle" fill="#2a2a2a">1</text><line x1="478.4" y1="441.6" x2="481.9" y2="443.5" stroke="#1a1a1a" stroke-width="1.3"/><text x="480.6" y="457.9" font-size="7.8" text-anchor="middle" fill="#2a2a2a">0.5</text><line x1="473.5" y1="448.0" x2="476.3" y2="450.8" stroke="#1a1a1a" stroke-width="1.3"/><defs><radialGradient id="kg410383o" cx="0.42" cy="0.3" r="0.75"><stop offset="0" stop-color="#dcdcdc"/><stop offset="0.55" stop-color="#a4a4a4"/><stop offset="1" stop-color="#5e5e5e"/></radialGradient><linearGradient id="kg410383i" x1="0" y1="0" x2="1" y2="1"><stop offset="0" stop-color="#7a7a7a"/><stop offset="0.45" stop-color="#f4f4f4"/><stop offset="0.55" stop-color="#c8c8c8"/><stop offset="1" stop-color="#8a8a8a"/></linearGradient></defs><circle cx="453" cy="427.5" r="29.3" fill="url(#kg410383o)" stroke="#4a4a4a" stroke-width="1"/><circle cx="453" cy="428.0" r="15.5" fill="url(#kg410383i)" stroke="#3a3a3a" stroke-width="1.4"/><path d="M428.9 439.6L438.7 441.4L433.3 430.6Z" fill="#c8845c" stroke="#c8845c" stroke-width="1.5" stroke-linejoin="round"/><circle cx="461.2" cy="422.4" r="2.6" fill="#c8845c"/><rect x="435.7" y="458" width="34.69999999999999" height="12" fill="#fff"/><path d="M436.5 470V458" stroke="#111" stroke-width="1.6"/><path d="M435.7 458H470.4" stroke="#c8c8c8" stroke-width="1"/><text x="439.2" y="467.5" font-size="9" fill="#333">0.14</text><text x="422.9" y="468" font-size="9.5" text-anchor="middle" fill="#222">ms</text><text x="482.8" y="468" font-size="9.5" text-anchor="middle" fill="#222">μs</text><text x="529" y="298.5" font-size="9" text-anchor="middle" fill="#333">Position</text><rect x="511.8" y="301.7" width="38.19999999999999" height="79.30000000000001" fill="#b4b4b4" stroke="#e0e0e0" stroke-width="1"/><path d="M511.8 301.7H550V381" fill="none" stroke="#2a2a2a" stroke-width="1.5"/><defs><linearGradient id="dg511.8301.7" x1="0" y1="0" x2="0" y2="1"><stop offset="0" stop-color="#4a4a4a"/><stop offset="0.5" stop-color="#f4f4f4"/><stop offset="1" stop-color="#3a3a3a"/></linearGradient></defs><rect x="518.8" y="304.7" width="25.200000000000045" height="74.30000000000001" fill="url(#dg511.8301.7)"/><g stroke="#222" stroke-width="0.8"><line x1="519.8" y1="307.7" x2="522.8" y2="307.7"/><line x1="540" y1="307.7" x2="543" y2="307.7"/><line x1="519.8" y1="312.7" x2="522.8" y2="312.7"/><line x1="540" y1="312.7" x2="543" y2="312.7"/><line x1="519.8" y1="317.7" x2="522.8" y2="317.7"/><line x1="540" y1="317.7" x2="543" y2="317.7"/><line x1="519.8" y1="322.7" x2="522.8" y2="322.7"/><line x1="540" y1="322.7" x2="543" y2="322.7"/><line x1="519.8" y1="327.7" x2="522.8" y2="327.7"/><line x1="540" y1="327.7" x2="543" y2="327.7"/><line x1="519.8" y1="332.7" x2="522.8" y2="332.7"/><line x1="540" y1="332.7" x2="543" y2="332.7"/><line x1="519.8" y1="337.7" x2="522.8" y2="337.7"/><line x1="540" y1="337.7" x2="543" y2="337.7"/><line x1="519.8" y1="342.7" x2="522.8" y2="342.7"/><line x1="540" y1="342.7" x2="543" y2="342.7"/><line x1="519.8" y1="347.7" x2="522.8" y2="347.7"/><line x1="540" y1="347.7" x2="543" y2="347.7"/><line x1="519.8" y1="352.7" x2="522.8" y2="352.7"/><line x1="540" y1="352.7" x2="543" y2="352.7"/><line x1="519.8" y1="357.7" x2="522.8" y2="357.7"/><line x1="540" y1="357.7" x2="543" y2="357.7"/><line x1="519.8" y1="362.7" x2="522.8" y2="362.7"/><line x1="540" y1="362.7" x2="543" y2="362.7"/><line x1="519.8" y1="367.7" x2="522.8" y2="367.7"/><line x1="540" y1="367.7" x2="543" y2="367.7"/><line x1="519.8" y1="372.7" x2="522.8" y2="372.7"/><line x1="540" y1="372.7" x2="543" y2="372.7"/><line x1="519.8" y1="377.7" x2="522.8" y2="377.7"/><line x1="540" y1="377.7" x2="543" y2="377.7"/></g><text x="531.4" y="323" font-size="9.5" text-anchor="middle" fill="#1a1a1a">-30</text><text x="531.4" y="344" font-size="9.5" text-anchor="middle" fill="#1a1a1a">-40</text><text x="531.4" y="364" font-size="9.5" text-anchor="middle" fill="#1a1a1a">-50</text><path d="M512.8 336L519.8 340L512.8 344Z" fill="#c01028"/><path d="M549 336L543 340L549 344Z" fill="#c01028"/><path d="M505 330L501 335H509Z M505 350L501 345H509Z" fill="#4a90d8"/><line x1="505" y1="334" x2="505" y2="346" stroke="#4a90d8" stroke-width="2"/><text x="573" y="305.7" font-size="9.5" text-anchor="end" fill="#222">AC</text><text x="573" y="320.3" font-size="9.5" text-anchor="end" fill="#7c7c7c">DC</text><text x="573" y="334.2" font-size="9.5" text-anchor="end" fill="#222">GND</text><text x="573" y="346.7" font-size="9.5" text-anchor="end" fill="#3a3a3a">OFF</text><rect x="576" y="291.3" width="13" height="61.89999999999998" fill="#a8a8a8" stroke="#eaeaea"/><rect x="581.0" y="297.3" width="3" height="51.89999999999998" fill="#111"/><rect x="584.0" y="297.3" width="1" height="51.89999999999998" fill="#f0f0f0"/><rect x="577" y="292.3" width="11" height="14" fill="#c8c8c8" stroke="#222" stroke-width="1"/><path d="M579 296.3H586M579 299.3H586M579 302.3H586" stroke="#777" stroke-width="0.9"/><text x="575" y="367" font-size="9.5" text-anchor="end" fill="#333">Invert</text><defs><linearGradient id="bg577356.5" x1="0" y1="0" x2="1" y2="1"><stop offset="0" stop-color="#9a9a9a"/><stop offset="0.5" stop-color="#555"/><stop offset="1" stop-color="#2e2e2e"/></linearGradient></defs><rect x="577" y="356.5" width="13.5" height="15" fill="url(#bg577356.5)" stroke="#e6e6e6" stroke-width="1"/><path d="M577 371.5H590.5V356.5" stroke="#3a3a3a" fill="none"/><path d="M502.7 470V427.69999999999993A43.79999999999998 43.79999999999998 0 0 1 590.3 427.69999999999993V470Z" fill="#fff"/><path d="M502.7 470V427.69999999999993A43.79999999999998 43.79999999999998 0 0 1 590.3 427.69999999999993" fill="none" stroke="#e8e8e8" stroke-width="1"/><rect x="528.7" y="447.1" width="37.0" height="22.899999999999977" fill="#a9a9a9"/><line x1="528.7" y1="447.1" x2="528.7" y2="470" stroke="#9a9a9a" stroke-width="1"/><line x1="565.7" y1="447.1" x2="565.7" y2="470" stroke="#e0e0e0" stroke-width="1"/><text x="547.2" y="391.9" font-size="7.8" text-anchor="middle" fill="#2a2a2a">0.2</text><line x1="547.2" y1="398.1" x2="547.2" y2="394.1" stroke="#1a1a1a" stroke-width="1.3"/><text x="532.7" y="394.8" font-size="7.8" text-anchor="middle" fill="#2a2a2a">0.1</text><line x1="536.1" y1="400.3" x2="534.6" y2="396.6" stroke="#1a1a1a" stroke-width="1.3"/><text x="561.7" y="394.8" font-size="7.8" text-anchor="middle" fill="#2a2a2a">0.5</text><line x1="558.3" y1="400.3" x2="559.8" y2="396.6" stroke="#1a1a1a" stroke-width="1.3"/><text x="520.3" y="403.0" font-size="7.8" text-anchor="middle" fill="#2a2a2a">1</text><line x1="526.7" y1="406.6" x2="523.9" y2="403.8" stroke="#1a1a1a" stroke-width="1.3"/><text x="512.1" y="415.4" font-size="7.8" text-anchor="middle" fill="#2a2a2a">2</text><line x1="520.4" y1="416.0" x2="516.7" y2="414.5" stroke="#1a1a1a" stroke-width="1.3"/><text x="509.2" y="429.9" font-size="7.8" text-anchor="middle" fill="#2a2a2a">5</text><line x1="518.2" y1="427.1" x2="514.2" y2="427.1" stroke="#1a1a1a" stroke-width="1.3"/><text x="512.1" y="444.4" font-size="7.8" text-anchor="middle" fill="#2a2a2a">10</text><line x1="520.4" y1="438.2" x2="516.7" y2="439.7" stroke="#1a1a1a" stroke-width="1.3"/><text x="520.3" y="456.8" font-size="7.8" text-anchor="middle" fill="#2a2a2a">20</text><line x1="526.7" y1="447.6" x2="523.9" y2="450.4" stroke="#1a1a1a" stroke-width="1.3"/><text x="574.1" y="403.0" font-size="7.8" text-anchor="middle" fill="#2a2a2a">50</text><line x1="567.7" y1="406.6" x2="570.5" y2="403.8" stroke="#1a1a1a" stroke-width="1.3"/><text x="582.3" y="415.4" font-size="7.8" text-anchor="middle" fill="#2a2a2a">20</text><line x1="574.0" y1="416.0" x2="577.7" y2="414.5" stroke="#1a1a1a" stroke-width="1.3"/><text x="585.2" y="429.9" font-size="7.8" text-anchor="middle" fill="#2a2a2a">10</text><line x1="576.2" y1="427.1" x2="580.2" y2="427.1" stroke="#1a1a1a" stroke-width="1.3"/><text x="582.3" y="444.4" font-size="7.8" text-anchor="middle" fill="#2a2a2a">5</text><line x1="574.0" y1="438.2" x2="577.7" y2="439.7" stroke="#1a1a1a" stroke-width="1.3"/><text x="574.1" y="456.8" font-size="7.8" text-anchor="middle" fill="#2a2a2a">2</text><line x1="567.7" y1="447.6" x2="570.5" y2="450.4" stroke="#1a1a1a" stroke-width="1.3"/><defs><radialGradient id="kg502383o" cx="0.42" cy="0.3" r="0.75"><stop offset="0" stop-color="#dcdcdc"/><stop offset="0.55" stop-color="#a4a4a4"/><stop offset="1" stop-color="#5e5e5e"/></radialGradient><linearGradient id="kg502383i" x1="0" y1="0" x2="1" y2="1"><stop offset="0" stop-color="#7a7a7a"/><stop offset="0.45" stop-color="#f4f4f4"/><stop offset="0.55" stop-color="#c8c8c8"/><stop offset="1" stop-color="#8a8a8a"/></linearGradient></defs><circle cx="547.2" cy="427.1" r="29.3" fill="url(#kg502383o)" stroke="#4a4a4a" stroke-width="1"/><circle cx="547.2" cy="427.6" r="15.5" fill="url(#kg502383i)" stroke="#3a3a3a" stroke-width="1.4"/><path d="M520.2 427.1L528.2 433.1L528.2 421.1Z" fill="#3a86d0" stroke="#3a86d0" stroke-width="1.5" stroke-linejoin="round"/><circle cx="552.8" cy="434.0" r="2.6" fill="#3a86d0"/><rect x="528.7" y="458" width="37.0" height="12" fill="#fff"/><path d="M529.5 470V458" stroke="#111" stroke-width="1.6"/><path d="M528.7 458H565.7" stroke="#c8c8c8" stroke-width="1"/><text x="532.2" y="467.5" font-size="9" fill="#333">5</text><text x="515.7" y="468" font-size="9.5" text-anchor="middle" fill="#222">V</text><text x="578.0" y="468" font-size="9.5" text-anchor="middle" fill="#222">mV</text><text x="624" y="298.5" font-size="9" text-anchor="middle" fill="#333">Position</text><rect x="605.3" y="301.7" width="38.200000000000045" height="79.30000000000001" fill="#b4b4b4" stroke="#e0e0e0" stroke-width="1"/><path d="M605.3 301.7H643.5V381" fill="none" stroke="#2a2a2a" stroke-width="1.5"/><defs><linearGradient id="dg605.3301.7" x1="0" y1="0" x2="0" y2="1"><stop offset="0" stop-color="#4a4a4a"/><stop offset="0.5" stop-color="#f4f4f4"/><stop offset="1" stop-color="#3a3a3a"/></linearGradient></defs><rect x="612.3" y="304.7" width="25.200000000000045" height="74.30000000000001" fill="url(#dg605.3301.7)"/><g stroke="#222" stroke-width="0.8"><line x1="613.3" y1="307.7" x2="616.3" y2="307.7"/><line x1="633.5" y1="307.7" x2="636.5" y2="307.7"/><line x1="613.3" y1="312.7" x2="616.3" y2="312.7"/><line x1="633.5" y1="312.7" x2="636.5" y2="312.7"/><line x1="613.3" y1="317.7" x2="616.3" y2="317.7"/><line x1="633.5" y1="317.7" x2="636.5" y2="317.7"/><line x1="613.3" y1="322.7" x2="616.3" y2="322.7"/><line x1="633.5" y1="322.7" x2="636.5" y2="322.7"/><line x1="613.3" y1="327.7" x2="616.3" y2="327.7"/><line x1="633.5" y1="327.7" x2="636.5" y2="327.7"/><line x1="613.3" y1="332.7" x2="616.3" y2="332.7"/><line x1="633.5" y1="332.7" x2="636.5" y2="332.7"/><line x1="613.3" y1="337.7" x2="616.3" y2="337.7"/><line x1="633.5" y1="337.7" x2="636.5" y2="337.7"/><line x1="613.3" y1="342.7" x2="616.3" y2="342.7"/><line x1="633.5" y1="342.7" x2="636.5" y2="342.7"/><line x1="613.3" y1="347.7" x2="616.3" y2="347.7"/><line x1="633.5" y1="347.7" x2="636.5" y2="347.7"/><line x1="613.3" y1="352.7" x2="616.3" y2="352.7"/><line x1="633.5" y1="352.7" x2="636.5" y2="352.7"/><line x1="613.3" y1="357.7" x2="616.3" y2="357.7"/><line x1="633.5" y1="357.7" x2="636.5" y2="357.7"/><line x1="613.3" y1="362.7" x2="616.3" y2="362.7"/><line x1="633.5" y1="362.7" x2="636.5" y2="362.7"/><line x1="613.3" y1="367.7" x2="616.3" y2="367.7"/><line x1="633.5" y1="367.7" x2="636.5" y2="367.7"/><line x1="613.3" y1="372.7" x2="616.3" y2="372.7"/><line x1="633.5" y1="372.7" x2="636.5" y2="372.7"/><line x1="613.3" y1="377.7" x2="616.3" y2="377.7"/><line x1="633.5" y1="377.7" x2="636.5" y2="377.7"/></g><text x="624.9" y="323" font-size="9.5" text-anchor="middle" fill="#1a1a1a">-130</text><text x="624.9" y="344" font-size="9.5" text-anchor="middle" fill="#1a1a1a">-120</text><text x="624.9" y="364" font-size="9.5" text-anchor="middle" fill="#1a1a1a">-110</text><path d="M606.3 336L613.3 340L606.3 344Z" fill="#c01028"/><path d="M642.5 336L636.5 340L642.5 344Z" fill="#c01028"/><path d="M599 330L595 335H603Z M599 350L595 345H603Z" fill="#3aa048"/><line x1="599" y1="334" x2="599" y2="346" stroke="#3aa048" stroke-width="2"/><text x="667" y="305.7" font-size="9.5" text-anchor="end" fill="#222">AC</text><text x="667" y="320.3" font-size="9.5" text-anchor="end" fill="#7c7c7c">DC</text><text x="667" y="334.2" font-size="9.5" text-anchor="end" fill="#222">GND</text><text x="667" y="346.7" font-size="9.5" text-anchor="end" fill="#3a3a3a">OFF</text><rect x="670.5" y="291.3" width="13.0" height="61.89999999999998" fill="#a8a8a8" stroke="#eaeaea"/><rect x="675.5" y="297.3" width="3" height="51.89999999999998" fill="#111"/><rect x="678.5" y="297.3" width="1" height="51.89999999999998" fill="#f0f0f0"/><rect x="671.5" y="292.3" width="11.0" height="14" fill="#c8c8c8" stroke="#222" stroke-width="1"/><path d="M673.5 296.3H680.5M673.5 299.3H680.5M673.5 302.3H680.5" stroke="#777" stroke-width="0.9"/><text x="669" y="367" font-size="9.5" text-anchor="end" fill="#333">Invert</text><defs><linearGradient id="bg671356.5" x1="0" y1="0" x2="1" y2="1"><stop offset="0" stop-color="#9a9a9a"/><stop offset="0.5" stop-color="#555"/><stop offset="1" stop-color="#2e2e2e"/></linearGradient></defs><rect x="671" y="356.5" width="13.5" height="15" fill="url(#bg671356.5)" stroke="#e6e6e6" stroke-width="1"/><path d="M671 371.5H684.5V356.5" stroke="#3a3a3a" fill="none"/><path d="M597.9 470V426.34999999999997A42.44999999999999 42.44999999999999 0 0 1 682.8 426.34999999999997V470Z" fill="#fff"/><path d="M597.9 470V426.34999999999997A42.44999999999999 42.44999999999999 0 0 1 682.8 426.34999999999997" fill="none" stroke="#e8e8e8" stroke-width="1"/><rect x="622.7" y="446.5" width="36.0" height="23.5" fill="#a9a9a9"/><line x1="622.7" y1="446.5" x2="622.7" y2="470" stroke="#9a9a9a" stroke-width="1"/><line x1="658.7" y1="446.5" x2="658.7" y2="470" stroke="#e0e0e0" stroke-width="1"/><text x="640.4" y="391.3" font-size="7.8" text-anchor="middle" fill="#2a2a2a">0.2</text><line x1="640.4" y1="397.5" x2="640.4" y2="393.5" stroke="#1a1a1a" stroke-width="1.3"/><text x="625.9" y="394.2" font-size="7.8" text-anchor="middle" fill="#2a2a2a">0.1</text><line x1="629.3" y1="399.7" x2="627.8" y2="396.0" stroke="#1a1a1a" stroke-width="1.3"/><text x="654.9" y="394.2" font-size="7.8" text-anchor="middle" fill="#2a2a2a">0.5</text><line x1="651.5" y1="399.7" x2="653.0" y2="396.0" stroke="#1a1a1a" stroke-width="1.3"/><text x="613.5" y="402.4" font-size="7.8" text-anchor="middle" fill="#2a2a2a">1</text><line x1="619.9" y1="406.0" x2="617.1" y2="403.2" stroke="#1a1a1a" stroke-width="1.3"/><text x="605.3" y="414.8" font-size="7.8" text-anchor="middle" fill="#2a2a2a">2</text><line x1="613.6" y1="415.4" x2="609.9" y2="413.9" stroke="#1a1a1a" stroke-width="1.3"/><text x="602.4" y="429.3" font-size="7.8" text-anchor="middle" fill="#2a2a2a">5</text><line x1="611.4" y1="426.5" x2="607.4" y2="426.5" stroke="#1a1a1a" stroke-width="1.3"/><text x="605.3" y="443.8" font-size="7.8" text-anchor="middle" fill="#2a2a2a">10</text><line x1="613.6" y1="437.6" x2="609.9" y2="439.1" stroke="#1a1a1a" stroke-width="1.3"/><text x="613.5" y="456.2" font-size="7.8" text-anchor="middle" fill="#2a2a2a">20</text><line x1="619.9" y1="447.0" x2="617.1" y2="449.8" stroke="#1a1a1a" stroke-width="1.3"/><text x="667.3" y="402.4" font-size="7.8" text-anchor="middle" fill="#2a2a2a">50</text><line x1="660.9" y1="406.0" x2="663.7" y2="403.2" stroke="#1a1a1a" stroke-width="1.3"/><text x="675.5" y="414.8" font-size="7.8" text-anchor="middle" fill="#2a2a2a">20</text><line x1="667.2" y1="415.4" x2="670.9" y2="413.9" stroke="#1a1a1a" stroke-width="1.3"/><text x="678.4" y="429.3" font-size="7.8" text-anchor="middle" fill="#2a2a2a">10</text><line x1="669.4" y1="426.5" x2="673.4" y2="426.5" stroke="#1a1a1a" stroke-width="1.3"/><text x="675.5" y="443.8" font-size="7.8" text-anchor="middle" fill="#2a2a2a">5</text><line x1="667.2" y1="437.6" x2="670.9" y2="439.1" stroke="#1a1a1a" stroke-width="1.3"/><text x="667.3" y="456.2" font-size="7.8" text-anchor="middle" fill="#2a2a2a">2</text><line x1="660.9" y1="447.0" x2="663.7" y2="449.8" stroke="#1a1a1a" stroke-width="1.3"/><defs><radialGradient id="kg597383o" cx="0.42" cy="0.3" r="0.75"><stop offset="0" stop-color="#dcdcdc"/><stop offset="0.55" stop-color="#a4a4a4"/><stop offset="1" stop-color="#5e5e5e"/></radialGradient><linearGradient id="kg597383i" x1="0" y1="0" x2="1" y2="1"><stop offset="0" stop-color="#7a7a7a"/><stop offset="0.45" stop-color="#f4f4f4"/><stop offset="0.55" stop-color="#c8c8c8"/><stop offset="1" stop-color="#8a8a8a"/></linearGradient></defs><circle cx="640.4" cy="426.5" r="29.3" fill="url(#kg597383o)" stroke="#4a4a4a" stroke-width="1"/><circle cx="640.4" cy="427.0" r="15.5" fill="url(#kg597383i)" stroke="#3a3a3a" stroke-width="1.4"/><path d="M613.4 426.5L621.4 432.5L621.4 420.5Z" fill="#2e9a3e" stroke="#2e9a3e" stroke-width="1.5" stroke-linejoin="round"/><circle cx="647.6" cy="435.4" r="2.6" fill="#2e9a3e"/><rect x="622.7" y="458" width="36.0" height="12" fill="#fff"/><path d="M623.5 470V458" stroke="#111" stroke-width="1.6"/><path d="M622.7 458H658.7" stroke="#c8c8c8" stroke-width="1"/><text x="626.2" y="467.5" font-size="9" fill="#333">5</text><text x="610.3" y="468" font-size="9.5" text-anchor="middle" fill="#222">V</text><text x="670.8" y="468" font-size="9.5" text-anchor="middle" fill="#222">mV</text></svg>
<div class="a" style="left:0;top:498px;width:410px;height:221px;background:#c8c8c8"></div>
<div class="a" style="left:0;top:498px;width:410px;height:30px;background:#6b1f9c"></div>
<div class="a" style="left:-1px;top:506.5px;font-size:12.5px;line-height:16px;color:#f4eefa;white-space:nowrap;transform-origin:0 0;transform:scaleX(0.96)">tual Terminal</div>
<div class="a" style="left:390.5px;top:506px;width:18px;height:18.5px;background:#c5435c"></div>
<svg class="a" style="left:390px;top:506px" width="19" height="19"><path d="M7 8L12 12M12 8L7 12" stroke="#fff" stroke-width="2"/></svg>
<div class="a" style="left:0;top:528px;width:410px;height:3px;background:#d4c8dc"></div>
<div class="a" style="left:0;top:531px;width:389px;height:188px;background:#000"></div>
<div class="a" style="left:389px;top:531px;width:18px;height:188px;background:#f2f2f2"></div>
<svg class="a" style="left:389px;top:531px" width="18" height="20"><path d="M5 13L9 9L13 13" stroke="#a0a0a0" stroke-width="1.3" fill="none"/></svg>
<div class="a" style="left:0;top:531px;width:389px;height:20px;overflow:hidden"><div class="a" style="left:-10.6px;top:0.5px;font-family:'Liberation Mono',monospace;font-size:15px;line-height:16px;font-weight:bold;color:#36e636;white-space:nowrap;letter-spacing:0.35px;transform-origin:0 0;transform:scaleX(0.85)">?3?3?3?3?3?3?3?3?3?3?3?3?3?3?3?3?3?3?3?3?3?3?3?3?3?3?3?3?3?3</div></div>
<svg class="a" style="left:313px;top:511px" width="14" height="22"><path d="M1.5 1.5V17L5.5 13L8.5 20L11 19L8 12H13.5Z" fill="#fff" stroke="#222" stroke-width="1"/></svg>
</body></html>
